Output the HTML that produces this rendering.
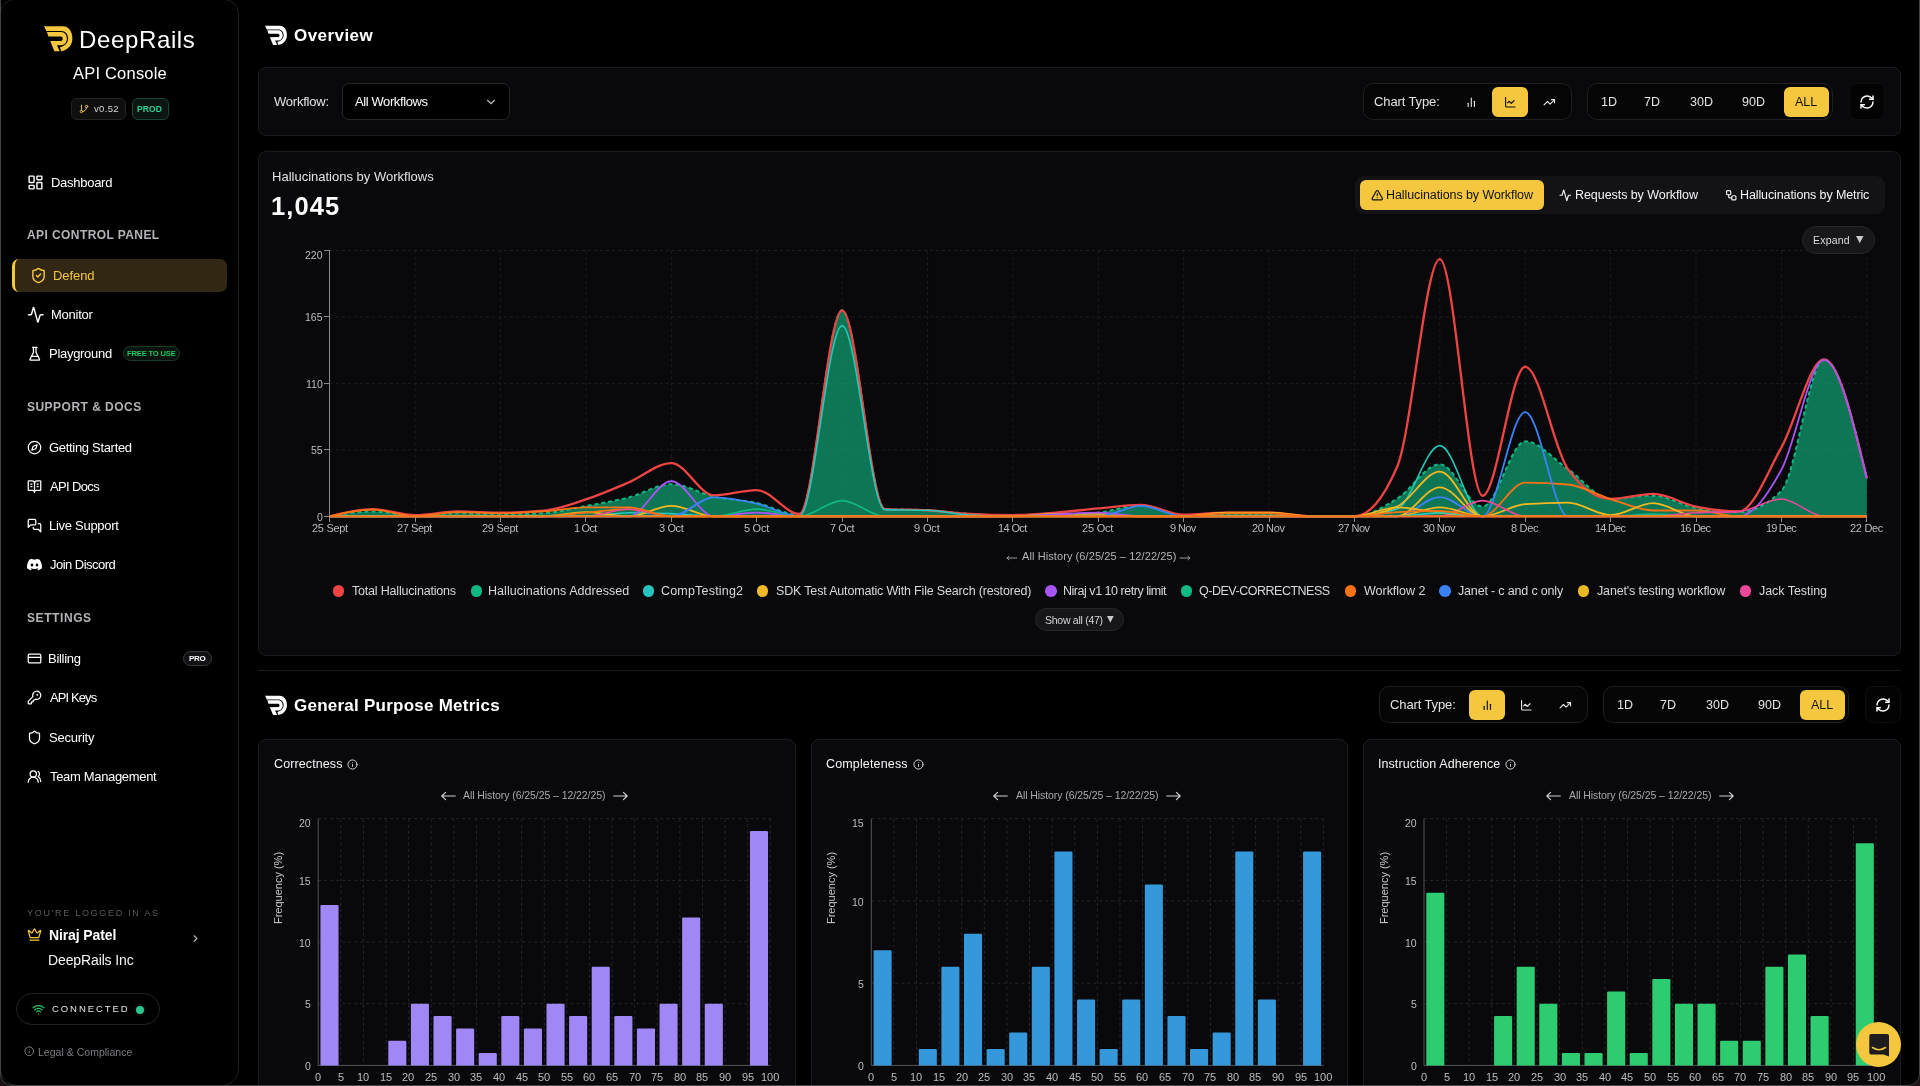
<!DOCTYPE html>
<html lang="en"><head><meta charset="utf-8"><title>DeepRails API Console</title>
<style>
html,body{margin:0;padding:0;background:#000;}
body{width:1920px;height:1086px;overflow:hidden;position:relative;font-family:"Liberation Sans",sans-serif;}
#root{position:absolute;left:0;top:0;width:1920px;height:1086px;overflow:hidden;background:#000;}
.t{position:absolute;white-space:nowrap;will-change:transform;font-family:"Liberation Sans",sans-serif;}
.b{position:absolute;box-sizing:border-box;}
svg.b{overflow:visible;}
</style></head><body><div id="root">
<svg class="b" style="left:261.9px;top:21.3px" width="30.8" height="27.72" viewBox="0 0 40 36"><path d="M4,6.3 L23,6.3 C29.2,6.3 32.4,12 32.4,18.6 C32.4,25.2 27.6,30.4 21.2,31.3 L19.9,27.3 C24.9,26.3 28.1,22.8 28.1,18.6 C28.1,14.2 25.6,10.9 21.2,10.9 L6.3,10.9 Z" fill="#fff"/><path d="M6.9,12.1 L21,12.1 C24.8,12.1 26.9,15.3 26.9,18.7 C26.9,22.4 24.2,25.3 20.6,25.3 L17,25.3 L19.7,31.3 L14.4,31.3 L10.2,21.1 L20.6,20.9 C22.2,20.9 22.7,19.8 22.7,18.7 C22.7,17.4 22,16.5 20.6,16.5 L8.4,16.5 Z" fill="#fff"/></svg>
<div class="t" style="left:294.30px;top:24.60px;font-size:17px;line-height:22px;color:#fff;font-weight:700;letter-spacing:0.436px;">Overview</div>
<div class="b" style="left:258px;top:67px;width:1643px;height:68.5px;background:#09090b;border:1px solid #1c1c20;border-radius:8px;box-sizing:border-box;"></div>
<div class="t" style="left:273.65px;top:93.00px;font-size:13px;line-height:17px;color:#e4e4e7;letter-spacing:-0.225px;">Workflow:</div>
<div class="b" style="left:342px;top:83px;width:168px;height:37px;background:#000;border:1px solid #26262a;border-radius:7px;box-sizing:border-box;"></div>
<div class="t" style="left:354.50px;top:93.00px;font-size:13px;line-height:17px;color:#fff;letter-spacing:-0.400px;">All Workflows</div>
<svg class="b" style="left:483.70px;top:94.80px" width="14" height="14" viewBox="0 0 24 24" fill="none" stroke="#b4b4b8" stroke-width="2" stroke-linecap="round" stroke-linejoin="round"><path d="m6 9 6 6 6-6"/></svg>
<div class="b" style="left:1363px;top:83px;width:208.7px;height:37px;background:#050506;border:1px solid #1f1f23;border-radius:10px;box-sizing:border-box;"></div>
<div class="t" style="left:1374.05px;top:93.00px;font-size:13px;line-height:17px;color:#e4e4e7;letter-spacing:-0.115px;">Chart Type:</div>
<svg class="b" style="left:1464.50px;top:95.60px" width="12.6" height="12.6" viewBox="0 0 24 24" fill="none" stroke="#e4e4e7" stroke-width="2.2" stroke-linecap="round" stroke-linejoin="round"><line x1="18" x2="18" y1="20" y2="10"/><line x1="12" x2="12" y1="20" y2="4"/><line x1="6" x2="6" y1="20" y2="14"/></svg>
<div class="b" style="left:1492px;top:87px;width:36px;height:29.5px;background:#f4c73f;border-radius:6px;"></div>
<svg class="b" style="left:1503.70px;top:95.60px" width="12.6" height="12.6" viewBox="0 0 24 24" fill="none" stroke="#111" stroke-width="2.2" stroke-linecap="round" stroke-linejoin="round"><path d="M3 3v16a2 2 0 0 0 2 2h16"/><path d="m19 9-5 5-4-4-3 3"/></svg>
<svg class="b" style="left:1542.70px;top:95.60px" width="12.6" height="12.6" viewBox="0 0 24 24" fill="none" stroke="#e4e4e7" stroke-width="2.2" stroke-linecap="round" stroke-linejoin="round"><polyline points="22 7 13.5 15.5 8.5 10.5 2 17"/><polyline points="16 7 22 7 22 13"/></svg>
<div class="b" style="left:1587px;top:83px;width:246px;height:37px;background:#050506;border:1px solid #1f1f23;border-radius:10px;box-sizing:border-box;"></div>
<div class="t" style="left:1600.83px;top:93.50px;font-size:12.5px;line-height:16px;color:#e4e4e7;">1D</div>
<div class="t" style="left:1643.97px;top:93.50px;font-size:12.5px;line-height:16px;color:#e4e4e7;">7D</div>
<div class="t" style="left:1689.60px;top:93.50px;font-size:12.5px;line-height:16px;color:#e4e4e7;">30D</div>
<div class="t" style="left:1742.15px;top:93.50px;font-size:12.5px;line-height:16px;color:#e4e4e7;">90D</div>
<div class="b" style="left:1784px;top:87px;width:44.5px;height:29.5px;background:#f4c73f;border-radius:6px;"></div>
<div class="t" style="left:1795.28px;top:93.50px;font-size:12.5px;line-height:16px;color:#111;">ALL</div>
<div class="b" style="left:1848.5px;top:83px;width:36.5px;height:37px;background:#030304;border:1px solid #0e0e10;border-radius:8px;box-sizing:border-box;"></div>
<svg class="b" style="left:1858.80px;top:93.50px" width="16" height="16" viewBox="0 0 24 24" fill="none" stroke="#fff" stroke-width="2.2" stroke-linecap="round" stroke-linejoin="round"><path d="M3 12a9 9 0 0 1 9-9 9.75 9.75 0 0 1 6.74 2.74L21 8"/><path d="M21 3v5h-5"/><path d="M21 12a9 9 0 0 1-9 9 9.75 9.75 0 0 1-6.74-2.74L3 16"/><path d="M8 16H3v5"/></svg>
<div class="b" style="left:258px;top:151px;width:1643px;height:504.5px;background:#09090b;border:1px solid #1c1c20;border-radius:8px;box-sizing:border-box;"></div>
<div class="t" style="left:272.15px;top:167.80px;font-size:13px;line-height:17px;color:#e4e4e7;letter-spacing:0.004px;">Hallucinations by Workflows</div>
<div class="t" style="left:271.40px;top:189.50px;font-size:25.5px;line-height:33px;color:#fff;font-weight:700;letter-spacing:1.113px;">1,045</div>
<div class="b" style="left:1355px;top:176px;width:530px;height:37.5px;background:#131316;border-radius:9px;"></div>
<div class="b" style="left:1360px;top:180px;width:184px;height:29.5px;background:#f4c73f;border-radius:6px;"></div>
<svg class="b" style="left:1371.05px;top:188.75px" width="12.5" height="12.5" viewBox="0 0 24 24" fill="none" stroke="#111" stroke-width="2.2" stroke-linecap="round" stroke-linejoin="round"><path d="m21.73 18-8-14a2 2 0 0 0-3.48 0l-8 14A2 2 0 0 0 4 21h16a2 2 0 0 0 1.73-3"/><path d="M12 9v4"/><path d="M12 17h.01"/></svg>
<div class="t" style="left:1386.40px;top:187.00px;font-size:12.5px;line-height:16px;color:#111;letter-spacing:-0.086px;">Hallucinations by Workflow</div>
<svg class="b" style="left:1559.25px;top:188.75px" width="12.5" height="12.5" viewBox="0 0 24 24" fill="none" stroke="#f4f4f5" stroke-width="2.2" stroke-linecap="round" stroke-linejoin="round"><path d="M22 12h-2.48a2 2 0 0 0-1.93 1.46l-2.35 8.36a.25.25 0 0 1-.48 0L9.24 2.18a.25.25 0 0 0-.48 0l-2.35 8.36A2 2 0 0 1 4.49 12H2"/></svg>
<div class="t" style="left:1575.00px;top:187.00px;font-size:12.5px;line-height:16px;color:#f4f4f5;letter-spacing:-0.061px;">Requests by Workflow</div>
<svg class="b" style="left:1724.75px;top:188.75px" width="12.5" height="12.5" viewBox="0 0 24 24" fill="none" stroke="#f4f4f5" stroke-width="2.2" stroke-linecap="round" stroke-linejoin="round"><rect width="8" height="8" x="3" y="3" rx="2"/><path d="M7 11v4a2 2 0 0 0 2 2h4"/><rect width="8" height="8" x="13" y="13" rx="2"/></svg>
<div class="t" style="left:1740.00px;top:187.00px;font-size:12.5px;line-height:16px;color:#f4f4f5;letter-spacing:-0.115px;">Hallucinations by Metric</div>
<svg class="b" style="left:0;top:0" width="1920" height="660" viewBox="0 0 1920 660" fill="none"><line x1="329.8" x2="1866.8" y1="449.85" y2="449.85" stroke="#1e1e22" stroke-dasharray="3 3"/><line x1="329.8" x2="1866.8" y1="383.40" y2="383.40" stroke="#1e1e22" stroke-dasharray="3 3"/><line x1="329.8" x2="1866.8" y1="316.95" y2="316.95" stroke="#1e1e22" stroke-dasharray="3 3"/><line x1="329.8" x2="1866.8" y1="250.50" y2="250.50" stroke="#1e1e22" stroke-dasharray="3 3"/><line x1="415.19" x2="415.19" y1="250.5" y2="516.3" stroke="#1e1e22" stroke-dasharray="3 3"/><line x1="500.58" x2="500.58" y1="250.5" y2="516.3" stroke="#1e1e22" stroke-dasharray="3 3"/><line x1="585.97" x2="585.97" y1="250.5" y2="516.3" stroke="#1e1e22" stroke-dasharray="3 3"/><line x1="671.36" x2="671.36" y1="250.5" y2="516.3" stroke="#1e1e22" stroke-dasharray="3 3"/><line x1="756.74" x2="756.74" y1="250.5" y2="516.3" stroke="#1e1e22" stroke-dasharray="3 3"/><line x1="842.13" x2="842.13" y1="250.5" y2="516.3" stroke="#1e1e22" stroke-dasharray="3 3"/><line x1="927.52" x2="927.52" y1="250.5" y2="516.3" stroke="#1e1e22" stroke-dasharray="3 3"/><line x1="1012.91" x2="1012.91" y1="250.5" y2="516.3" stroke="#1e1e22" stroke-dasharray="3 3"/><line x1="1098.30" x2="1098.30" y1="250.5" y2="516.3" stroke="#1e1e22" stroke-dasharray="3 3"/><line x1="1183.69" x2="1183.69" y1="250.5" y2="516.3" stroke="#1e1e22" stroke-dasharray="3 3"/><line x1="1269.08" x2="1269.08" y1="250.5" y2="516.3" stroke="#1e1e22" stroke-dasharray="3 3"/><line x1="1354.47" x2="1354.47" y1="250.5" y2="516.3" stroke="#1e1e22" stroke-dasharray="3 3"/><line x1="1439.86" x2="1439.86" y1="250.5" y2="516.3" stroke="#1e1e22" stroke-dasharray="3 3"/><line x1="1525.24" x2="1525.24" y1="250.5" y2="516.3" stroke="#1e1e22" stroke-dasharray="3 3"/><line x1="1610.63" x2="1610.63" y1="250.5" y2="516.3" stroke="#1e1e22" stroke-dasharray="3 3"/><line x1="1696.02" x2="1696.02" y1="250.5" y2="516.3" stroke="#1e1e22" stroke-dasharray="3 3"/><line x1="1781.41" x2="1781.41" y1="250.5" y2="516.3" stroke="#1e1e22" stroke-dasharray="3 3"/><line x1="1866.80" x2="1866.80" y1="250.5" y2="516.3" stroke="#1e1e22" stroke-dasharray="3 3"/><line x1="329.8" x2="329.8" y1="250.5" y2="522.3" stroke="#8a8a8e" shape-rendering="crispEdges"/><line x1="329.8" x2="1866.8" y1="516.3" y2="516.3" stroke="#8a8a8e" shape-rendering="crispEdges"/><line x1="323.8" x2="329.8" y1="516.30" y2="516.30" stroke="#8a8a8e" shape-rendering="crispEdges"/><line x1="323.8" x2="329.8" y1="449.85" y2="449.85" stroke="#8a8a8e" shape-rendering="crispEdges"/><line x1="323.8" x2="329.8" y1="383.40" y2="383.40" stroke="#8a8a8e" shape-rendering="crispEdges"/><line x1="323.8" x2="329.8" y1="316.95" y2="316.95" stroke="#8a8a8e" shape-rendering="crispEdges"/><line x1="323.8" x2="329.8" y1="250.50" y2="250.50" stroke="#8a8a8e" shape-rendering="crispEdges"/><line x1="329.80" x2="329.80" y1="516.3" y2="522.3" stroke="#8a8a8e" shape-rendering="crispEdges"/><line x1="415.19" x2="415.19" y1="516.3" y2="522.3" stroke="#8a8a8e" shape-rendering="crispEdges"/><line x1="500.58" x2="500.58" y1="516.3" y2="522.3" stroke="#8a8a8e" shape-rendering="crispEdges"/><line x1="585.97" x2="585.97" y1="516.3" y2="522.3" stroke="#8a8a8e" shape-rendering="crispEdges"/><line x1="671.36" x2="671.36" y1="516.3" y2="522.3" stroke="#8a8a8e" shape-rendering="crispEdges"/><line x1="756.74" x2="756.74" y1="516.3" y2="522.3" stroke="#8a8a8e" shape-rendering="crispEdges"/><line x1="842.13" x2="842.13" y1="516.3" y2="522.3" stroke="#8a8a8e" shape-rendering="crispEdges"/><line x1="927.52" x2="927.52" y1="516.3" y2="522.3" stroke="#8a8a8e" shape-rendering="crispEdges"/><line x1="1012.91" x2="1012.91" y1="516.3" y2="522.3" stroke="#8a8a8e" shape-rendering="crispEdges"/><line x1="1098.30" x2="1098.30" y1="516.3" y2="522.3" stroke="#8a8a8e" shape-rendering="crispEdges"/><line x1="1183.69" x2="1183.69" y1="516.3" y2="522.3" stroke="#8a8a8e" shape-rendering="crispEdges"/><line x1="1269.08" x2="1269.08" y1="516.3" y2="522.3" stroke="#8a8a8e" shape-rendering="crispEdges"/><line x1="1354.47" x2="1354.47" y1="516.3" y2="522.3" stroke="#8a8a8e" shape-rendering="crispEdges"/><line x1="1439.86" x2="1439.86" y1="516.3" y2="522.3" stroke="#8a8a8e" shape-rendering="crispEdges"/><line x1="1525.24" x2="1525.24" y1="516.3" y2="522.3" stroke="#8a8a8e" shape-rendering="crispEdges"/><line x1="1610.63" x2="1610.63" y1="516.3" y2="522.3" stroke="#8a8a8e" shape-rendering="crispEdges"/><line x1="1696.02" x2="1696.02" y1="516.3" y2="522.3" stroke="#8a8a8e" shape-rendering="crispEdges"/><line x1="1781.41" x2="1781.41" y1="516.3" y2="522.3" stroke="#8a8a8e" shape-rendering="crispEdges"/><line x1="1866.80" x2="1866.80" y1="516.3" y2="522.3" stroke="#8a8a8e" shape-rendering="crispEdges"/><path d="M329.80,516.30C344.03,513.88 358.26,511.47 372.49,511.47C386.73,511.47 400.96,515.70 415.19,515.70C429.42,515.70 443.65,513.28 457.88,513.28C472.11,513.28 486.35,514.49 500.58,514.49C514.81,514.49 529.04,514.09 543.27,513.28C557.50,512.47 571.74,508.67 585.97,506.03C600.20,503.39 614.43,501.10 628.66,497.45C642.89,493.81 657.12,484.16 671.36,484.16C685.59,484.16 699.82,493.47 714.05,496.61C728.28,499.75 742.51,499.99 756.74,503.01C770.98,506.03 785.21,514.73 799.44,514.73C813.67,514.73 827.90,310.30 842.13,310.30C856.36,310.30 870.60,508.25 884.83,509.05C899.06,509.86 913.29,509.45 927.52,510.26C941.75,511.06 955.99,512.98 970.22,513.88C984.45,514.79 998.68,515.70 1012.91,515.70C1027.14,515.70 1041.37,515.49 1055.61,515.09C1069.84,514.69 1084.07,514.29 1098.30,512.68C1112.53,511.06 1126.76,505.43 1140.99,505.43C1155.23,505.43 1169.46,515.70 1183.69,515.70C1197.92,515.70 1212.15,513.88 1226.38,513.88C1240.61,513.88 1254.85,513.88 1269.08,513.88C1283.31,513.88 1297.54,516.30 1311.77,516.30C1326.00,516.30 1340.24,516.30 1354.47,516.30C1368.70,516.30 1382.93,507.32 1397.16,498.66C1411.39,490.00 1425.62,464.35 1439.86,464.35C1454.09,464.35 1468.32,506.63 1482.55,506.63C1496.78,506.63 1511.01,441.39 1525.24,441.39C1539.48,441.39 1553.71,459.58 1567.94,469.18C1582.17,478.79 1596.40,499.02 1610.63,499.02C1624.86,499.02 1639.10,495.76 1653.33,495.76C1667.56,495.76 1681.79,505.43 1696.02,508.08C1710.25,510.74 1724.49,512.07 1738.72,512.07C1752.95,512.07 1767.18,505.02 1781.41,490.93C1795.64,476.83 1809.87,359.48 1824.11,359.48C1838.34,359.48 1852.57,418.86 1866.80,478.24L1866.8,516.3L329.8,516.3Z" fill="#10b981" fill-opacity="0.62"/><path d="M329.80,516.30C344.03,513.88 358.26,511.47 372.49,511.47C386.73,511.47 400.96,515.70 415.19,515.70C429.42,515.70 443.65,513.28 457.88,513.28C472.11,513.28 486.35,514.49 500.58,514.49C514.81,514.49 529.04,514.09 543.27,513.28C557.50,512.47 571.74,508.67 585.97,506.03C600.20,503.39 614.43,501.10 628.66,497.45C642.89,493.81 657.12,484.16 671.36,484.16C685.59,484.16 699.82,493.47 714.05,496.61C728.28,499.75 742.51,499.99 756.74,503.01C770.98,506.03 785.21,514.73 799.44,514.73C813.67,514.73 827.90,310.30 842.13,310.30C856.36,310.30 870.60,508.25 884.83,509.05C899.06,509.86 913.29,509.45 927.52,510.26C941.75,511.06 955.99,512.98 970.22,513.88C984.45,514.79 998.68,515.70 1012.91,515.70C1027.14,515.70 1041.37,515.49 1055.61,515.09C1069.84,514.69 1084.07,514.29 1098.30,512.68C1112.53,511.06 1126.76,505.43 1140.99,505.43C1155.23,505.43 1169.46,515.70 1183.69,515.70C1197.92,515.70 1212.15,513.88 1226.38,513.88C1240.61,513.88 1254.85,513.88 1269.08,513.88C1283.31,513.88 1297.54,516.30 1311.77,516.30C1326.00,516.30 1340.24,516.30 1354.47,516.30C1368.70,516.30 1382.93,507.32 1397.16,498.66C1411.39,490.00 1425.62,464.35 1439.86,464.35C1454.09,464.35 1468.32,506.63 1482.55,506.63C1496.78,506.63 1511.01,441.39 1525.24,441.39C1539.48,441.39 1553.71,459.58 1567.94,469.18C1582.17,478.79 1596.40,499.02 1610.63,499.02C1624.86,499.02 1639.10,495.76 1653.33,495.76C1667.56,495.76 1681.79,505.43 1696.02,508.08C1710.25,510.74 1724.49,512.07 1738.72,512.07C1752.95,512.07 1767.18,505.02 1781.41,490.93C1795.64,476.83 1809.87,359.48 1824.11,359.48C1838.34,359.48 1852.57,418.86 1866.80,478.24" fill="none" stroke="#10b981" stroke-width="2" stroke-dasharray="4 3"/><path d="M329.80,516.30C344.03,512.68 358.26,509.05 372.49,509.05C386.73,509.05 400.96,515.09 415.19,515.09C429.42,515.09 443.65,511.47 457.88,511.47C472.11,511.47 486.35,512.68 500.58,512.68C514.81,512.68 529.04,512.03 543.27,510.74C557.50,509.45 571.74,504.10 585.97,499.39C600.20,494.67 614.43,488.51 628.66,482.47C642.89,476.43 657.12,463.14 671.36,463.14C685.59,463.14 699.82,495.40 714.05,495.40C728.28,495.40 742.51,490.08 756.74,490.08C770.98,490.08 785.21,513.88 799.44,513.88C813.67,513.88 827.90,310.30 842.13,310.30C856.36,310.30 870.60,508.25 884.83,509.05C899.06,509.86 913.29,509.45 927.52,510.26C941.75,511.06 955.99,513.08 970.22,513.88C984.45,514.69 998.68,515.09 1012.91,515.09C1027.14,515.09 1041.37,513.78 1055.61,512.68C1069.84,511.57 1084.07,509.76 1098.30,508.45C1112.53,507.14 1126.76,504.82 1140.99,504.82C1155.23,504.82 1169.46,514.73 1183.69,514.73C1197.92,514.73 1212.15,512.68 1226.38,512.68C1240.61,512.68 1254.85,512.68 1269.08,512.68C1283.31,512.68 1297.54,516.30 1311.77,516.30C1326.00,516.30 1340.24,516.30 1354.47,516.30C1368.70,516.30 1382.93,499.79 1397.16,466.76C1411.39,433.74 1425.62,259.20 1439.86,259.20C1454.09,259.20 1468.32,495.76 1482.55,495.76C1496.78,495.76 1511.01,366.73 1525.24,366.73C1539.48,366.73 1553.71,449.29 1567.94,469.18C1582.17,489.08 1596.40,499.02 1610.63,499.02C1624.86,499.02 1639.10,493.95 1653.33,493.95C1667.56,493.95 1681.79,503.71 1696.02,506.63C1710.25,509.55 1724.49,511.47 1738.72,511.47C1752.95,511.47 1767.18,472.77 1781.41,447.43C1795.64,422.10 1809.87,359.48 1824.11,359.48C1838.34,359.48 1852.57,418.86 1866.80,478.24" fill="none" stroke="#ef4444" stroke-width="2.3"/><path d="M329.80,516.30C344.03,516.30 358.26,516.30 372.49,516.30C386.73,516.30 400.96,516.30 415.19,516.30C429.42,516.30 443.65,516.30 457.88,516.30C472.11,516.30 486.35,516.30 500.58,516.30C514.81,516.30 529.04,516.30 543.27,516.30C557.50,516.30 571.74,516.30 585.97,516.30C600.20,516.30 614.43,512.68 628.66,512.68C642.89,512.68 657.12,513.04 671.36,513.64C685.59,514.25 699.82,516.30 714.05,516.30C728.28,516.30 742.51,516.30 756.74,516.30C770.98,516.30 785.21,516.30 799.44,516.30C813.67,516.30 827.90,325.65 842.13,325.65C856.36,325.65 870.60,509.25 884.83,509.65C899.06,510.06 913.29,509.86 927.52,510.26C941.75,510.66 955.99,514.29 970.22,515.09C984.45,515.90 998.68,516.30 1012.91,516.30C1027.14,516.30 1041.37,516.30 1055.61,516.30C1069.84,516.30 1084.07,516.30 1098.30,516.30C1112.53,516.30 1126.76,516.30 1140.99,516.30C1155.23,516.30 1169.46,516.30 1183.69,516.30C1197.92,516.30 1212.15,516.30 1226.38,516.30C1240.61,516.30 1254.85,516.30 1269.08,516.30C1283.31,516.30 1297.54,516.30 1311.77,516.30C1326.00,516.30 1340.24,516.30 1354.47,516.30C1368.70,516.30 1382.93,513.88 1397.16,509.05C1411.39,504.22 1425.62,445.62 1439.86,445.62C1454.09,445.62 1468.32,516.30 1482.55,516.30C1496.78,516.30 1511.01,516.30 1525.24,516.30C1539.48,516.30 1553.71,516.30 1567.94,516.30C1582.17,516.30 1596.40,516.30 1610.63,516.30C1624.86,516.30 1639.10,516.30 1653.33,516.30C1667.56,516.30 1681.79,516.30 1696.02,516.30C1710.25,516.30 1724.49,516.30 1738.72,516.30C1752.95,516.30 1767.18,516.30 1781.41,516.30C1795.64,516.30 1809.87,516.30 1824.11,516.30C1838.34,516.30 1852.57,516.30 1866.80,516.30" fill="none" stroke="#25c9bd" stroke-width="1.6"/><path d="M329.80,516.30C344.03,516.30 358.26,516.30 372.49,516.30C386.73,516.30 400.96,516.30 415.19,516.30C429.42,516.30 443.65,516.30 457.88,516.30C472.11,516.30 486.35,516.30 500.58,516.30C514.81,516.30 529.04,516.30 543.27,516.30C557.50,516.30 571.74,512.07 585.97,512.07C600.20,512.07 614.43,516.30 628.66,516.30C642.89,516.30 657.12,505.79 671.36,505.79C685.59,505.79 699.82,516.30 714.05,516.30C728.28,516.30 742.51,516.30 756.74,516.30C770.98,516.30 785.21,516.30 799.44,516.30C813.67,516.30 827.90,516.30 842.13,516.30C856.36,516.30 870.60,516.30 884.83,516.30C899.06,516.30 913.29,516.30 927.52,516.30C941.75,516.30 955.99,516.30 970.22,516.30C984.45,516.30 998.68,516.30 1012.91,516.30C1027.14,516.30 1041.37,513.88 1055.61,513.88C1069.84,513.88 1084.07,513.88 1098.30,513.88C1112.53,513.88 1126.76,516.30 1140.99,516.30C1155.23,516.30 1169.46,516.30 1183.69,516.30C1197.92,516.30 1212.15,516.30 1226.38,516.30C1240.61,516.30 1254.85,516.30 1269.08,516.30C1283.31,516.30 1297.54,516.30 1311.77,516.30C1326.00,516.30 1340.24,516.30 1354.47,516.30C1368.70,516.30 1382.93,513.08 1397.16,506.63C1411.39,500.19 1425.62,471.60 1439.86,471.60C1454.09,471.60 1468.32,516.30 1482.55,516.30C1496.78,516.30 1511.01,516.30 1525.24,516.30C1539.48,516.30 1553.71,516.30 1567.94,516.30C1582.17,516.30 1596.40,516.30 1610.63,516.30C1624.86,516.30 1639.10,516.30 1653.33,516.30C1667.56,516.30 1681.79,516.30 1696.02,516.30C1710.25,516.30 1724.49,516.30 1738.72,516.30C1752.95,516.30 1767.18,516.30 1781.41,516.30C1795.64,516.30 1809.87,516.30 1824.11,516.30C1838.34,516.30 1852.57,516.30 1866.80,516.30" fill="none" stroke="#f5b91f" stroke-width="1.8"/><path d="M329.80,516.30C344.03,516.30 358.26,516.30 372.49,516.30C386.73,516.30 400.96,516.30 415.19,516.30C429.42,516.30 443.65,516.30 457.88,516.30C472.11,516.30 486.35,516.30 500.58,516.30C514.81,516.30 529.04,516.30 543.27,516.30C557.50,516.30 571.74,516.30 585.97,516.30C600.20,516.30 614.43,516.30 628.66,516.30C642.89,516.30 657.12,481.26 671.36,481.26C685.59,481.26 699.82,516.30 714.05,516.30C728.28,516.30 742.51,512.68 756.74,512.68C770.98,512.68 785.21,516.30 799.44,516.30C813.67,516.30 827.90,516.30 842.13,516.30C856.36,516.30 870.60,516.30 884.83,516.30C899.06,516.30 913.29,516.30 927.52,516.30C941.75,516.30 955.99,516.30 970.22,516.30C984.45,516.30 998.68,516.30 1012.91,516.30C1027.14,516.30 1041.37,515.09 1055.61,514.49C1069.84,513.88 1084.07,512.68 1098.30,512.68C1112.53,512.68 1126.76,516.30 1140.99,516.30C1155.23,516.30 1169.46,516.30 1183.69,516.30C1197.92,516.30 1212.15,516.30 1226.38,516.30C1240.61,516.30 1254.85,516.30 1269.08,516.30C1283.31,516.30 1297.54,516.30 1311.77,516.30C1326.00,516.30 1340.24,516.30 1354.47,516.30C1368.70,516.30 1382.93,516.30 1397.16,516.30C1411.39,516.30 1425.62,516.30 1439.86,516.30C1454.09,516.30 1468.32,516.30 1482.55,516.30C1496.78,516.30 1511.01,516.30 1525.24,516.30C1539.48,516.30 1553.71,516.30 1567.94,516.30C1582.17,516.30 1596.40,516.30 1610.63,516.30C1624.86,516.30 1639.10,516.30 1653.33,516.30C1667.56,516.30 1681.79,516.30 1696.02,516.30C1710.25,516.30 1724.49,516.30 1738.72,516.30C1752.95,516.30 1767.18,495.72 1781.41,469.66C1795.64,443.61 1809.87,359.96 1824.11,359.96C1838.34,359.96 1852.57,419.10 1866.80,478.24" fill="none" stroke="#a855f7" stroke-width="1.8"/><path d="M329.80,516.30C344.03,516.30 358.26,516.30 372.49,516.30C386.73,516.30 400.96,516.30 415.19,516.30C429.42,516.30 443.65,516.30 457.88,516.30C472.11,516.30 486.35,516.30 500.58,516.30C514.81,516.30 529.04,516.30 543.27,516.30C557.50,516.30 571.74,516.30 585.97,516.30C600.20,516.30 614.43,516.30 628.66,516.30C642.89,516.30 657.12,516.30 671.36,516.30C685.59,516.30 699.82,516.30 714.05,516.30C728.28,516.30 742.51,509.17 756.74,509.17C770.98,509.17 785.21,516.30 799.44,516.30C813.67,516.30 827.90,500.59 842.13,500.59C856.36,500.59 870.60,516.30 884.83,516.30C899.06,516.30 913.29,516.30 927.52,516.30C941.75,516.30 955.99,516.30 970.22,516.30C984.45,516.30 998.68,516.30 1012.91,516.30C1027.14,516.30 1041.37,516.30 1055.61,516.30C1069.84,516.30 1084.07,516.30 1098.30,516.30C1112.53,516.30 1126.76,516.30 1140.99,516.30C1155.23,516.30 1169.46,516.30 1183.69,516.30C1197.92,516.30 1212.15,516.30 1226.38,516.30C1240.61,516.30 1254.85,516.30 1269.08,516.30C1283.31,516.30 1297.54,516.30 1311.77,516.30C1326.00,516.30 1340.24,516.30 1354.47,516.30C1368.70,516.30 1382.93,516.30 1397.16,516.30C1411.39,516.30 1425.62,513.28 1439.86,513.28C1454.09,513.28 1468.32,516.30 1482.55,516.30C1496.78,516.30 1511.01,516.30 1525.24,516.30C1539.48,516.30 1553.71,516.30 1567.94,516.30C1582.17,516.30 1596.40,516.30 1610.63,516.30C1624.86,516.30 1639.10,514.13 1653.33,514.13C1667.56,514.13 1681.79,516.30 1696.02,516.30C1710.25,516.30 1724.49,516.30 1738.72,516.30C1752.95,516.30 1767.18,516.30 1781.41,516.30C1795.64,516.30 1809.87,516.30 1824.11,516.30C1838.34,516.30 1852.57,516.30 1866.80,516.30" fill="none" stroke="#10b981" stroke-width="1.6"/><path d="M329.80,516.30C344.03,516.30 358.26,516.30 372.49,516.30C386.73,516.30 400.96,516.30 415.19,516.30C429.42,516.30 443.65,516.30 457.88,516.30C472.11,516.30 486.35,516.30 500.58,516.30C514.81,516.30 529.04,516.30 543.27,516.30C557.50,516.30 571.74,513.88 585.97,512.68C600.20,511.47 614.43,509.05 628.66,509.05C642.89,509.05 657.12,516.30 671.36,516.30C685.59,516.30 699.82,516.30 714.05,516.30C728.28,516.30 742.51,516.30 756.74,516.30C770.98,516.30 785.21,516.30 799.44,516.30C813.67,516.30 827.90,516.30 842.13,516.30C856.36,516.30 870.60,516.30 884.83,516.30C899.06,516.30 913.29,516.30 927.52,516.30C941.75,516.30 955.99,516.30 970.22,516.30C984.45,516.30 998.68,516.30 1012.91,516.30C1027.14,516.30 1041.37,516.30 1055.61,516.30C1069.84,516.30 1084.07,516.30 1098.30,516.30C1112.53,516.30 1126.76,516.30 1140.99,516.30C1155.23,516.30 1169.46,516.30 1183.69,516.30C1197.92,516.30 1212.15,516.30 1226.38,516.30C1240.61,516.30 1254.85,516.30 1269.08,516.30C1283.31,516.30 1297.54,516.30 1311.77,516.30C1326.00,516.30 1340.24,516.30 1354.47,516.30C1368.70,516.30 1382.93,516.30 1397.16,516.30C1411.39,516.30 1425.62,516.30 1439.86,516.30C1454.09,516.30 1468.32,516.30 1482.55,516.30C1496.78,516.30 1511.01,482.71 1525.24,482.71C1539.48,482.71 1553.71,483.32 1567.94,484.52C1582.17,485.73 1596.40,494.69 1610.63,499.02C1624.86,503.35 1639.10,510.50 1653.33,510.50C1667.56,510.50 1681.79,510.50 1696.02,510.50C1710.25,510.50 1724.49,516.30 1738.72,516.30C1752.95,516.30 1767.18,516.30 1781.41,516.30C1795.64,516.30 1809.87,516.30 1824.11,516.30C1838.34,516.30 1852.57,516.30 1866.80,516.30" fill="none" stroke="#f97316" stroke-width="1.8"/><path d="M329.80,516.30C344.03,516.30 358.26,516.30 372.49,516.30C386.73,516.30 400.96,516.30 415.19,516.30C429.42,516.30 443.65,516.30 457.88,516.30C472.11,516.30 486.35,516.30 500.58,516.30C514.81,516.30 529.04,516.30 543.27,516.30C557.50,516.30 571.74,516.30 585.97,516.30C600.20,516.30 614.43,516.30 628.66,516.30C642.89,516.30 657.12,516.30 671.36,516.30C685.59,516.30 699.82,497.45 714.05,497.45C728.28,497.45 742.51,500.59 756.74,503.73C770.98,506.88 785.21,516.30 799.44,516.30C813.67,516.30 827.90,516.30 842.13,516.30C856.36,516.30 870.60,516.30 884.83,516.30C899.06,516.30 913.29,516.30 927.52,516.30C941.75,516.30 955.99,516.30 970.22,516.30C984.45,516.30 998.68,516.30 1012.91,516.30C1027.14,516.30 1041.37,516.30 1055.61,516.30C1069.84,516.30 1084.07,516.30 1098.30,516.30C1112.53,516.30 1126.76,505.79 1140.99,505.79C1155.23,505.79 1169.46,516.30 1183.69,516.30C1197.92,516.30 1212.15,516.30 1226.38,516.30C1240.61,516.30 1254.85,516.30 1269.08,516.30C1283.31,516.30 1297.54,516.30 1311.77,516.30C1326.00,516.30 1340.24,516.30 1354.47,516.30C1368.70,516.30 1382.93,516.30 1397.16,516.30C1411.39,516.30 1425.62,497.09 1439.86,497.09C1454.09,497.09 1468.32,516.30 1482.55,516.30C1496.78,516.30 1511.01,412.15 1525.24,412.15C1539.48,412.15 1553.71,516.30 1567.94,516.30C1582.17,516.30 1596.40,516.30 1610.63,516.30C1624.86,516.30 1639.10,516.30 1653.33,516.30C1667.56,516.30 1681.79,516.30 1696.02,516.30C1710.25,516.30 1724.49,516.30 1738.72,516.30C1752.95,516.30 1767.18,516.30 1781.41,516.30C1795.64,516.30 1809.87,516.30 1824.11,516.30C1838.34,516.30 1852.57,516.30 1866.80,516.30" fill="none" stroke="#3b82f6" stroke-width="1.8"/><path d="M329.80,516.30C344.03,516.30 358.26,516.30 372.49,516.30C386.73,516.30 400.96,516.30 415.19,516.30C429.42,516.30 443.65,516.30 457.88,516.30C472.11,516.30 486.35,516.30 500.58,516.30C514.81,516.30 529.04,516.30 543.27,516.30C557.50,516.30 571.74,516.30 585.97,516.30C600.20,516.30 614.43,516.30 628.66,516.30C642.89,516.30 657.12,516.30 671.36,516.30C685.59,516.30 699.82,516.30 714.05,516.30C728.28,516.30 742.51,516.30 756.74,516.30C770.98,516.30 785.21,516.30 799.44,516.30C813.67,516.30 827.90,516.30 842.13,516.30C856.36,516.30 870.60,516.30 884.83,516.30C899.06,516.30 913.29,516.30 927.52,516.30C941.75,516.30 955.99,516.30 970.22,516.30C984.45,516.30 998.68,516.30 1012.91,516.30C1027.14,516.30 1041.37,516.30 1055.61,516.30C1069.84,516.30 1084.07,516.30 1098.30,516.30C1112.53,516.30 1126.76,516.30 1140.99,516.30C1155.23,516.30 1169.46,516.30 1183.69,516.30C1197.92,516.30 1212.15,516.30 1226.38,516.30C1240.61,516.30 1254.85,516.30 1269.08,516.30C1283.31,516.30 1297.54,516.30 1311.77,516.30C1326.00,516.30 1340.24,516.30 1354.47,516.30C1368.70,516.30 1382.93,516.30 1397.16,516.30C1411.39,516.30 1425.62,487.30 1439.86,487.30C1454.09,487.30 1468.32,516.30 1482.55,516.30C1496.78,516.30 1511.01,505.27 1525.24,504.22C1539.48,503.17 1553.71,502.65 1567.94,502.65C1582.17,502.65 1596.40,515.09 1610.63,515.09C1624.86,515.09 1639.10,503.13 1653.33,503.13C1667.56,503.13 1681.79,516.30 1696.02,516.30C1710.25,516.30 1724.49,516.30 1738.72,516.30C1752.95,516.30 1767.18,516.30 1781.41,516.30C1795.64,516.30 1809.87,516.30 1824.11,516.30C1838.34,516.30 1852.57,516.30 1866.80,516.30" fill="none" stroke="#f5b91f" stroke-width="1.8"/><path d="M329.80,516.30C344.03,516.30 358.26,516.30 372.49,516.30C386.73,516.30 400.96,516.30 415.19,516.30C429.42,516.30 443.65,516.30 457.88,516.30C472.11,516.30 486.35,516.30 500.58,516.30C514.81,516.30 529.04,516.30 543.27,516.30C557.50,516.30 571.74,516.30 585.97,516.30C600.20,516.30 614.43,509.29 628.66,509.29C642.89,509.29 657.12,516.30 671.36,516.30C685.59,516.30 699.82,516.30 714.05,516.30C728.28,516.30 742.51,516.30 756.74,516.30C770.98,516.30 785.21,516.30 799.44,516.30C813.67,516.30 827.90,516.30 842.13,516.30C856.36,516.30 870.60,516.30 884.83,516.30C899.06,516.30 913.29,516.30 927.52,516.30C941.75,516.30 955.99,516.30 970.22,516.30C984.45,516.30 998.68,516.30 1012.91,516.30C1027.14,516.30 1041.37,516.30 1055.61,516.30C1069.84,516.30 1084.07,516.30 1098.30,516.30C1112.53,516.30 1126.76,516.30 1140.99,516.30C1155.23,516.30 1169.46,516.30 1183.69,516.30C1197.92,516.30 1212.15,516.30 1226.38,516.30C1240.61,516.30 1254.85,516.30 1269.08,516.30C1283.31,516.30 1297.54,516.30 1311.77,516.30C1326.00,516.30 1340.24,516.30 1354.47,516.30C1368.70,516.30 1382.93,516.30 1397.16,516.30C1411.39,516.30 1425.62,516.30 1439.86,516.30C1454.09,516.30 1468.32,500.59 1482.55,500.59C1496.78,500.59 1511.01,516.30 1525.24,516.30C1539.48,516.30 1553.71,516.30 1567.94,516.30C1582.17,516.30 1596.40,516.30 1610.63,516.30C1624.86,516.30 1639.10,516.30 1653.33,516.30C1667.56,516.30 1681.79,513.40 1696.02,512.68C1710.25,511.95 1724.49,512.31 1738.72,511.59C1752.95,510.86 1767.18,499.02 1781.41,499.02C1795.64,499.02 1809.87,516.30 1824.11,516.30C1838.34,516.30 1852.57,516.30 1866.80,516.30" fill="none" stroke="#ec4899" stroke-width="1.6"/><path d="M329.80,516.30C344.03,516.30 358.26,516.30 372.49,516.30C386.73,516.30 400.96,516.30 415.19,516.30C429.42,516.30 443.65,516.30 457.88,516.30C472.11,516.30 486.35,516.30 500.58,516.30C514.81,516.30 529.04,516.30 543.27,516.30C557.50,516.30 571.74,516.30 585.97,516.30C600.20,516.30 614.43,516.30 628.66,516.30C642.89,516.30 657.12,516.30 671.36,516.30C685.59,516.30 699.82,516.30 714.05,516.30C728.28,516.30 742.51,516.30 756.74,516.30C770.98,516.30 785.21,516.30 799.44,516.30C813.67,516.30 827.90,516.30 842.13,516.30C856.36,516.30 870.60,516.30 884.83,516.30C899.06,516.30 913.29,516.30 927.52,516.30C941.75,516.30 955.99,516.30 970.22,516.30C984.45,516.30 998.68,516.30 1012.91,516.30C1027.14,516.30 1041.37,516.30 1055.61,516.30C1069.84,516.30 1084.07,516.30 1098.30,516.30C1112.53,516.30 1126.76,516.30 1140.99,516.30C1155.23,516.30 1169.46,516.30 1183.69,516.30C1197.92,516.30 1212.15,516.30 1226.38,516.30C1240.61,516.30 1254.85,516.30 1269.08,516.30C1283.31,516.30 1297.54,516.30 1311.77,516.30C1326.00,516.30 1340.24,516.30 1354.47,516.30C1368.70,516.30 1382.93,507.36 1397.16,507.36C1411.39,507.36 1425.62,511.19 1439.86,512.68C1454.09,514.17 1468.32,516.30 1482.55,516.30C1496.78,516.30 1511.01,516.30 1525.24,516.30C1539.48,516.30 1553.71,516.30 1567.94,516.30C1582.17,516.30 1596.40,516.30 1610.63,516.30C1624.86,516.30 1639.10,516.30 1653.33,516.30C1667.56,516.30 1681.79,516.30 1696.02,516.30C1710.25,516.30 1724.49,516.30 1738.72,516.30C1752.95,516.30 1767.18,516.30 1781.41,516.30C1795.64,516.30 1809.87,516.30 1824.11,516.30C1838.34,516.30 1852.57,516.30 1866.80,516.30" fill="none" stroke="#f5b91f" stroke-width="1.6"/><path d="M329.80,516.30C344.03,516.30 358.26,516.30 372.49,516.30C386.73,516.30 400.96,516.30 415.19,516.30C429.42,516.30 443.65,516.30 457.88,516.30C472.11,516.30 486.35,516.30 500.58,516.30C514.81,516.30 529.04,516.30 543.27,516.30C557.50,516.30 571.74,516.30 585.97,516.30C600.20,516.30 614.43,516.30 628.66,516.30C642.89,516.30 657.12,516.30 671.36,516.30C685.59,516.30 699.82,516.30 714.05,516.30C728.28,516.30 742.51,516.30 756.74,516.30C770.98,516.30 785.21,516.30 799.44,516.30C813.67,516.30 827.90,516.30 842.13,516.30C856.36,516.30 870.60,516.30 884.83,516.30C899.06,516.30 913.29,516.30 927.52,516.30C941.75,516.30 955.99,516.30 970.22,516.30C984.45,516.30 998.68,516.30 1012.91,516.30C1027.14,516.30 1041.37,516.30 1055.61,516.30C1069.84,516.30 1084.07,516.30 1098.30,516.30C1112.53,516.30 1126.76,516.30 1140.99,516.30C1155.23,516.30 1169.46,516.30 1183.69,516.30C1197.92,516.30 1212.15,512.43 1226.38,512.43C1240.61,512.43 1254.85,512.43 1269.08,512.43C1283.31,512.43 1297.54,516.30 1311.77,516.30C1326.00,516.30 1340.24,516.30 1354.47,516.30C1368.70,516.30 1382.93,516.30 1397.16,516.30C1411.39,516.30 1425.62,507.36 1439.86,507.36C1454.09,507.36 1468.32,516.30 1482.55,516.30C1496.78,516.30 1511.01,516.30 1525.24,516.30C1539.48,516.30 1553.71,516.30 1567.94,516.30C1582.17,516.30 1596.40,516.30 1610.63,516.30C1624.86,516.30 1639.10,516.30 1653.33,516.30C1667.56,516.30 1681.79,516.30 1696.02,516.30C1710.25,516.30 1724.49,516.30 1738.72,516.30C1752.95,516.30 1767.18,516.30 1781.41,516.30C1795.64,516.30 1809.87,516.30 1824.11,516.30C1838.34,516.30 1852.57,516.30 1866.80,516.30" fill="none" stroke="#f5b91f" stroke-width="1.6"/><path d="M329.80,516.30C344.03,516.30 358.26,516.30 372.49,516.30C386.73,516.30 400.96,516.30 415.19,516.30C429.42,516.30 443.65,516.30 457.88,516.30C472.11,516.30 486.35,516.30 500.58,516.30C514.81,516.30 529.04,516.30 543.27,516.30C557.50,516.30 571.74,516.30 585.97,516.30C600.20,516.30 614.43,516.30 628.66,516.30C642.89,516.30 657.12,516.30 671.36,516.30C685.59,516.30 699.82,516.30 714.05,516.30C728.28,516.30 742.51,516.30 756.74,516.30C770.98,516.30 785.21,516.30 799.44,516.30C813.67,516.30 827.90,516.30 842.13,516.30C856.36,516.30 870.60,516.30 884.83,516.30C899.06,516.30 913.29,516.30 927.52,516.30C941.75,516.30 955.99,516.30 970.22,516.30C984.45,516.30 998.68,516.30 1012.91,516.30C1027.14,516.30 1041.37,516.30 1055.61,516.30C1069.84,516.30 1084.07,516.30 1098.30,516.30C1112.53,516.30 1126.76,516.30 1140.99,516.30C1155.23,516.30 1169.46,516.30 1183.69,516.30C1197.92,516.30 1212.15,516.30 1226.38,516.30C1240.61,516.30 1254.85,516.30 1269.08,516.30C1283.31,516.30 1297.54,516.30 1311.77,516.30C1326.00,516.30 1340.24,516.30 1354.47,516.30C1368.70,516.30 1382.93,516.30 1397.16,516.30C1411.39,516.30 1425.62,512.68 1439.86,512.68C1454.09,512.68 1468.32,516.30 1482.55,516.30C1496.78,516.30 1511.01,516.30 1525.24,516.30C1539.48,516.30 1553.71,516.30 1567.94,516.30C1582.17,516.30 1596.40,516.30 1610.63,516.30C1624.86,516.30 1639.10,516.30 1653.33,516.30C1667.56,516.30 1681.79,516.30 1696.02,516.30C1710.25,516.30 1724.49,516.30 1738.72,516.30C1752.95,516.30 1767.18,516.30 1781.41,516.30C1795.64,516.30 1809.87,516.30 1824.11,516.30C1838.34,516.30 1852.57,516.30 1866.80,516.30" fill="none" stroke="#25c9bd" stroke-width="1.4"/><path d="M329.80,516.30C344.03,512.98 358.26,509.65 372.49,509.65C386.73,509.65 400.96,516.30 415.19,516.30C429.42,516.30 443.65,512.07 457.88,512.07C472.11,512.07 486.35,513.28 500.58,513.28C514.81,513.28 529.04,512.45 543.27,511.47C557.50,510.48 571.74,507.36 585.97,507.36C600.20,507.36 614.43,507.36 628.66,507.36C642.89,507.36 657.12,516.30 671.36,516.30C685.59,516.30 699.82,516.30 714.05,516.30C728.28,516.30 742.51,516.30 756.74,516.30C770.98,516.30 785.21,516.30 799.44,516.30C813.67,516.30 827.90,516.30 842.13,516.30C856.36,516.30 870.60,516.30 884.83,516.30C899.06,516.30 913.29,516.30 927.52,516.30C941.75,516.30 955.99,516.30 970.22,516.30C984.45,516.30 998.68,516.30 1012.91,516.30C1027.14,516.30 1041.37,516.30 1055.61,516.30C1069.84,516.30 1084.07,516.30 1098.30,516.30C1112.53,516.30 1126.76,516.30 1140.99,516.30C1155.23,516.30 1169.46,516.30 1183.69,516.30C1197.92,516.30 1212.15,513.28 1226.38,513.28C1240.61,513.28 1254.85,513.28 1269.08,513.28C1283.31,513.28 1297.54,516.30 1311.77,516.30C1326.00,516.30 1340.24,516.30 1354.47,516.30C1368.70,516.30 1382.93,512.80 1397.16,512.07C1411.39,511.35 1425.62,510.98 1439.86,510.98C1454.09,510.98 1468.32,516.30 1482.55,516.30C1496.78,516.30 1511.01,516.30 1525.24,516.30C1539.48,516.30 1553.71,516.30 1567.94,516.30C1582.17,516.30 1596.40,516.30 1610.63,516.30C1624.86,516.30 1639.10,516.30 1653.33,516.30C1667.56,516.30 1681.79,516.30 1696.02,516.30C1710.25,516.30 1724.49,516.30 1738.72,516.30C1752.95,516.30 1767.18,516.30 1781.41,516.30C1795.64,516.30 1809.87,516.30 1824.11,516.30C1838.34,516.30 1852.57,516.30 1866.80,516.30" fill="none" stroke="#f97316" stroke-width="1.8"/><path d="M329.80,516.30C344.03,516.30 358.26,516.30 372.49,516.30C386.73,516.30 400.96,516.30 415.19,516.30C429.42,516.30 443.65,516.30 457.88,516.30C472.11,516.30 486.35,516.30 500.58,516.30C514.81,516.30 529.04,516.30 543.27,516.30C557.50,516.30 571.74,516.30 585.97,516.30C600.20,516.30 614.43,516.30 628.66,516.30C642.89,516.30 657.12,516.30 671.36,516.30C685.59,516.30 699.82,516.30 714.05,516.30C728.28,516.30 742.51,516.30 756.74,516.30C770.98,516.30 785.21,516.30 799.44,516.30C813.67,516.30 827.90,516.30 842.13,516.30C856.36,516.30 870.60,516.30 884.83,516.30C899.06,516.30 913.29,516.30 927.52,516.30C941.75,516.30 955.99,516.30 970.22,516.30C984.45,516.30 998.68,516.30 1012.91,516.30C1027.14,516.30 1041.37,516.30 1055.61,516.30C1069.84,516.30 1084.07,516.30 1098.30,516.30C1112.53,516.30 1126.76,516.30 1140.99,516.30C1155.23,516.30 1169.46,516.30 1183.69,516.30C1197.92,516.30 1212.15,516.30 1226.38,516.30C1240.61,516.30 1254.85,516.30 1269.08,516.30C1283.31,516.30 1297.54,516.30 1311.77,516.30C1326.00,516.30 1340.24,516.30 1354.47,516.30C1368.70,516.30 1382.93,516.30 1397.16,516.30C1411.39,516.30 1425.62,516.30 1439.86,516.30C1454.09,516.30 1468.32,516.30 1482.55,516.30C1496.78,516.30 1511.01,516.30 1525.24,516.30C1539.48,516.30 1553.71,516.30 1567.94,516.30C1582.17,516.30 1596.40,516.30 1610.63,516.30C1624.86,516.30 1639.10,516.30 1653.33,516.30C1667.56,516.30 1681.79,516.30 1696.02,516.30C1710.25,516.30 1724.49,516.30 1738.72,516.30C1752.95,516.30 1767.18,516.30 1781.41,516.30C1795.64,516.30 1809.87,516.30 1824.11,516.30C1838.34,516.30 1852.57,516.30 1866.80,516.30" fill="none" stroke="#f97316" stroke-width="1.8"/></svg>
<div class="t" style="left:305.05px;top:247.60px;font-size:10.5px;line-height:14px;color:#bcbcc0;">220</div>
<div class="t" style="left:305.10px;top:310.10px;font-size:10.5px;line-height:14px;color:#bcbcc0;">165</div>
<div class="t" style="left:305.85px;top:376.50px;font-size:10.5px;line-height:14px;color:#bcbcc0;">110</div>
<div class="t" style="left:310.95px;top:443.00px;font-size:10.5px;line-height:14px;color:#bcbcc0;">55</div>
<div class="t" style="left:316.75px;top:509.90px;font-size:10.5px;line-height:14px;color:#bcbcc0;">0</div>
<div class="t" style="left:311.50px;top:521.40px;font-size:11px;line-height:14px;color:#bcbcc0;letter-spacing:-0.300px;">25 Sept</div>
<div class="t" style="left:397.29px;top:521.40px;font-size:11px;line-height:14px;color:#bcbcc0;letter-spacing:-0.433px;">27 Sept</div>
<div class="t" style="left:482.18px;top:521.40px;font-size:11px;line-height:14px;color:#bcbcc0;letter-spacing:-0.267px;">29 Sept</div>
<div class="t" style="left:573.97px;top:521.40px;font-size:11px;line-height:14px;color:#bcbcc0;letter-spacing:-0.775px;">1 Oct</div>
<div class="t" style="left:658.81px;top:521.40px;font-size:11px;line-height:14px;color:#bcbcc0;letter-spacing:-0.388px;">3 Oct</div>
<div class="t" style="left:743.94px;top:521.40px;font-size:11px;line-height:14px;color:#bcbcc0;letter-spacing:-0.275px;">5 Oct</div>
<div class="t" style="left:829.58px;top:521.40px;font-size:11px;line-height:14px;color:#bcbcc0;letter-spacing:-0.425px;">7 Oct</div>
<div class="t" style="left:914.42px;top:521.40px;font-size:11px;line-height:14px;color:#bcbcc0;letter-spacing:-0.138px;">9 Oct</div>
<div class="t" style="left:997.86px;top:521.40px;font-size:11px;line-height:14px;color:#bcbcc0;letter-spacing:-0.620px;">14 Oct</div>
<div class="t" style="left:1082.40px;top:521.40px;font-size:11px;line-height:14px;color:#bcbcc0;letter-spacing:-0.220px;">25 Oct</div>
<div class="t" style="left:1170.29px;top:521.40px;font-size:11px;line-height:14px;color:#bcbcc0;letter-spacing:-0.600px;">9 Nov</div>
<div class="t" style="left:1252.38px;top:521.40px;font-size:11px;line-height:14px;color:#bcbcc0;letter-spacing:-0.390px;">20 Nov</div>
<div class="t" style="left:1338.27px;top:521.40px;font-size:11px;line-height:14px;color:#bcbcc0;letter-spacing:-0.590px;">27 Nov</div>
<div class="t" style="left:1423.46px;top:521.40px;font-size:11px;line-height:14px;color:#bcbcc0;letter-spacing:-0.480px;">30 Nov</div>
<div class="t" style="left:1511.44px;top:521.40px;font-size:11px;line-height:14px;color:#bcbcc0;letter-spacing:-0.325px;">8 Dec</div>
<div class="t" style="left:1594.88px;top:521.40px;font-size:11px;line-height:14px;color:#bcbcc0;letter-spacing:-0.780px;">14 Dec</div>
<div class="t" style="left:1680.27px;top:521.40px;font-size:11px;line-height:14px;color:#bcbcc0;letter-spacing:-0.780px;">16 Dec</div>
<div class="t" style="left:1765.81px;top:521.40px;font-size:11px;line-height:14px;color:#bcbcc0;letter-spacing:-0.840px;">19 Dec</div>
<div class="t" style="left:1850.00px;top:521.40px;font-size:11px;line-height:14px;color:#bcbcc0;letter-spacing:-0.300px;">22 Dec</div>
<div class="t" style="left:1021.70px;top:549.30px;font-size:11px;line-height:14px;color:#b4b4b8;letter-spacing:0.087px;">All History (6/25/25 – 12/22/25)</div>
<svg class="b" style="left:1006px;top:552.5px;" width="12" height="10" viewBox="0 0 12 10" fill="none"><path d="M10.8,5H1M2.9,3.2L1,5L2.9,6.8" stroke="#9a9a9e" stroke-width="1" stroke-linecap="round" stroke-linejoin="round"/></svg>
<svg class="b" style="left:1178.5px;top:552.5px;" width="12" height="10" viewBox="0 0 12 10" fill="none"><path d="M1,5H10.8M8.9,3.2L10.8,5L8.9,6.8" stroke="#9a9a9e" stroke-width="1" stroke-linecap="round" stroke-linejoin="round"/></svg>
<div class="b" style="left:332.5px;top:585.0px;width:11.6px;height:11.6px;border-radius:50%;background:#ef4444"></div>
<div class="t" style="left:351.75px;top:582.80px;font-size:12.5px;line-height:16px;color:#d8d8dc;letter-spacing:-0.189px;">Total Hallucinations</div>
<div class="b" style="left:470.5px;top:585.0px;width:11.6px;height:11.6px;border-radius:50%;background:#10b981"></div>
<div class="t" style="left:487.80px;top:582.80px;font-size:12.5px;line-height:16px;color:#d8d8dc;letter-spacing:0.041px;">Hallucinations Addressed</div>
<div class="b" style="left:642.5px;top:585.0px;width:11.6px;height:11.6px;border-radius:50%;background:#25c4c0"></div>
<div class="t" style="left:661.10px;top:582.80px;font-size:12.5px;line-height:16px;color:#d8d8dc;letter-spacing:0.191px;">CompTesting2</div>
<div class="b" style="left:756.7px;top:585.0px;width:11.6px;height:11.6px;border-radius:50%;background:#f0b92a"></div>
<div class="t" style="left:775.75px;top:582.80px;font-size:12.5px;line-height:16px;color:#d8d8dc;letter-spacing:-0.170px;">SDK Test Automatic With File Search (restored)</div>
<div class="b" style="left:1045.0px;top:585.0px;width:11.6px;height:11.6px;border-radius:50%;background:#a855f7"></div>
<div class="t" style="left:1062.80px;top:582.80px;font-size:12.5px;line-height:16px;color:#d8d8dc;letter-spacing:-0.470px;">Niraj v1 10 retry limit</div>
<div class="b" style="left:1180.9px;top:585.0px;width:11.6px;height:11.6px;border-radius:50%;background:#10b981"></div>
<div class="t" style="left:1199.40px;top:582.80px;font-size:12.5px;line-height:16px;color:#d8d8dc;letter-spacing:-0.484px;">Q-DEV-CORRECTNESS</div>
<div class="b" style="left:1344.6px;top:585.0px;width:11.6px;height:11.6px;border-radius:50%;background:#f97316"></div>
<div class="t" style="left:1363.75px;top:582.80px;font-size:12.5px;line-height:16px;color:#d8d8dc;letter-spacing:-0.017px;">Workflow 2</div>
<div class="b" style="left:1439.2px;top:585.0px;width:11.6px;height:11.6px;border-radius:50%;background:#3b82f6"></div>
<div class="t" style="left:1458.10px;top:582.80px;font-size:12.5px;line-height:16px;color:#d8d8dc;letter-spacing:-0.168px;">Janet - c and c only</div>
<div class="b" style="left:1577.5px;top:585.0px;width:11.6px;height:11.6px;border-radius:50%;background:#e8b923"></div>
<div class="t" style="left:1596.80px;top:582.80px;font-size:12.5px;line-height:16px;color:#d8d8dc;letter-spacing:-0.150px;">Janet's testing workflow</div>
<div class="b" style="left:1739.6px;top:585.0px;width:11.6px;height:11.6px;border-radius:50%;background:#ec4899"></div>
<div class="t" style="left:1758.60px;top:582.80px;font-size:12.5px;line-height:16px;color:#d8d8dc;letter-spacing:-0.050px;">Jack Testing</div>
<div class="b" style="left:1035.4px;top:608.3px;width:88.4px;height:23.2px;background:#17171a;border:1px solid #26272d;border-radius:11.6px;box-sizing:border-box;"></div>
<div class="t" style="left:1045.05px;top:613.00px;font-size:10.5px;line-height:14px;color:#d4d4d8;letter-spacing:-0.267px;">Show all (47)</div>
<svg class="b" style="left:1106.9px;top:616.2px;" width="6.7" height="6.7" viewBox="0 0 6.7 6.7" fill="none"><path d="M0,0H6.7L3.35,6.7Z" fill="#c9c9cb"/></svg>
<div class="b" style="left:1802.2px;top:226px;width:72.8px;height:27.8px;background:#17171a;border:1px solid #26272d;border-radius:14px;box-sizing:border-box;"></div>
<div class="t" style="left:1813.15px;top:233.00px;font-size:10.5px;line-height:14px;color:#dcdcde;letter-spacing:0.190px;">Expand</div>
<svg class="b" style="left:1855.6px;top:236px;" width="7.5" height="7.2" viewBox="0 0 7.5 7.2" fill="none"><path d="M0,0H7.5L3.75,7.2Z" fill="#c9c9cb"/></svg>
<div class="b" style="left:258px;top:670px;width:1643px;height:1px;background:#1b1b1e;"></div>
<svg class="b" style="left:262.2px;top:691.2px" width="30.8" height="27.72" viewBox="0 0 40 36"><path d="M4,6.3 L23,6.3 C29.2,6.3 32.4,12 32.4,18.6 C32.4,25.2 27.6,30.4 21.2,31.3 L19.9,27.3 C24.9,26.3 28.1,22.8 28.1,18.6 C28.1,14.2 25.6,10.9 21.2,10.9 L6.3,10.9 Z" fill="#fff"/><path d="M6.9,12.1 L21,12.1 C24.8,12.1 26.9,15.3 26.9,18.7 C26.9,22.4 24.2,25.3 20.6,25.3 L17,25.3 L19.7,31.3 L14.4,31.3 L10.2,21.1 L20.6,20.9 C22.2,20.9 22.7,19.8 22.7,18.7 C22.7,17.4 22,16.5 20.6,16.5 L8.4,16.5 Z" fill="#fff"/></svg>
<div class="t" style="left:294.10px;top:695.00px;font-size:17px;line-height:22px;color:#fff;font-weight:700;letter-spacing:0.241px;">General Purpose Metrics</div>
<div class="b" style="left:1379px;top:686px;width:208.7px;height:37px;background:#050506;border:1px solid #1f1f23;border-radius:10px;box-sizing:border-box;"></div>
<div class="t" style="left:1390.05px;top:696.00px;font-size:13px;line-height:17px;color:#e4e4e7;letter-spacing:-0.115px;">Chart Type:</div>
<div class="b" style="left:1468.8px;top:690px;width:36px;height:29.5px;background:#f4c73f;border-radius:6px;"></div>
<svg class="b" style="left:1480.50px;top:698.60px" width="12.6" height="12.6" viewBox="0 0 24 24" fill="none" stroke="#111" stroke-width="2.2" stroke-linecap="round" stroke-linejoin="round"><line x1="18" x2="18" y1="20" y2="10"/><line x1="12" x2="12" y1="20" y2="4"/><line x1="6" x2="6" y1="20" y2="14"/></svg>
<svg class="b" style="left:1519.70px;top:698.60px" width="12.6" height="12.6" viewBox="0 0 24 24" fill="none" stroke="#e4e4e7" stroke-width="2.2" stroke-linecap="round" stroke-linejoin="round"><path d="M3 3v16a2 2 0 0 0 2 2h16"/><path d="m19 9-5 5-4-4-3 3"/></svg>
<svg class="b" style="left:1558.70px;top:698.60px" width="12.6" height="12.6" viewBox="0 0 24 24" fill="none" stroke="#e4e4e7" stroke-width="2.2" stroke-linecap="round" stroke-linejoin="round"><polyline points="22 7 13.5 15.5 8.5 10.5 2 17"/><polyline points="16 7 22 7 22 13"/></svg>
<div class="b" style="left:1603px;top:686px;width:246px;height:37px;background:#050506;border:1px solid #1f1f23;border-radius:10px;box-sizing:border-box;"></div>
<div class="t" style="left:1616.83px;top:696.50px;font-size:12.5px;line-height:16px;color:#e4e4e7;">1D</div>
<div class="t" style="left:1659.97px;top:696.50px;font-size:12.5px;line-height:16px;color:#e4e4e7;">7D</div>
<div class="t" style="left:1705.60px;top:696.50px;font-size:12.5px;line-height:16px;color:#e4e4e7;">30D</div>
<div class="t" style="left:1758.15px;top:696.50px;font-size:12.5px;line-height:16px;color:#e4e4e7;">90D</div>
<div class="b" style="left:1800px;top:690px;width:44.5px;height:29.5px;background:#f4c73f;border-radius:6px;"></div>
<div class="t" style="left:1811.28px;top:696.50px;font-size:12.5px;line-height:16px;color:#111;">ALL</div>
<div class="b" style="left:1864.5px;top:686px;width:36.5px;height:37px;background:#030304;border:1px solid #0e0e10;border-radius:8px;box-sizing:border-box;"></div>
<svg class="b" style="left:1874.80px;top:696.50px" width="16" height="16" viewBox="0 0 24 24" fill="none" stroke="#fff" stroke-width="2.2" stroke-linecap="round" stroke-linejoin="round"><path d="M3 12a9 9 0 0 1 9-9 9.75 9.75 0 0 1 6.74 2.74L21 8"/><path d="M21 3v5h-5"/><path d="M21 12a9 9 0 0 1-9 9 9.75 9.75 0 0 1-6.74-2.74L3 16"/><path d="M8 16H3v5"/></svg>
<div class="b" style="left:258.4px;top:739.3px;width:537.2px;height:420px;background:#09090b;border:1px solid #1c1c20;border-radius:8px;box-sizing:border-box;"></div>
<div class="t" style="left:273.60px;top:755.90px;font-size:12.5px;line-height:16px;color:#f4f4f5;letter-spacing:0.105px;">Correctness</div>
<svg class="b" style="left:347.10px;top:758.50px" width="11" height="11" viewBox="0 0 24 24" fill="none" stroke="#e4e4e7" stroke-width="2" stroke-linecap="round" stroke-linejoin="round"><circle cx="12" cy="12" r="10"/><path d="M12 16v-4"/><path d="M12 8h.01"/></svg>
<svg class="b" style="left:440.59999999999997px;top:790.7px;" width="15" height="10" viewBox="0 0 15 10" fill="none"><path d="M14.3,5H0.8M4.6,1.3L0.8,5L4.6,8.7" stroke="#d4d4d8" stroke-width="1.1" stroke-linecap="round" stroke-linejoin="round"/></svg>
<div class="t" style="left:463.40px;top:788.10px;font-size:10.5px;line-height:14px;color:#a8a8ae;letter-spacing:-0.074px;">All History (6/25/25 – 12/22/25)</div>
<svg class="b" style="left:613.2px;top:790.7px;" width="15" height="10" viewBox="0 0 15 10" fill="none"><path d="M0.7,5H14.2M10.4,1.3L14.2,5L10.4,8.7" stroke="#d4d4d8" stroke-width="1.1" stroke-linecap="round" stroke-linejoin="round"/></svg>
<svg class="b" style="left:0;top:0" width="1920" height="1086" viewBox="0 0 1920 1086" fill="none"><line x1="318.20" x2="770.30" y1="1003.73" y2="1003.73" stroke="#27272b" stroke-dasharray="3 3"/><line x1="318.20" x2="770.30" y1="942.05" y2="942.05" stroke="#27272b" stroke-dasharray="3 3"/><line x1="318.20" x2="770.30" y1="880.38" y2="880.38" stroke="#27272b" stroke-dasharray="3 3"/><line x1="318.20" x2="770.30" y1="818.70" y2="818.70" stroke="#27272b" stroke-dasharray="3 3"/><line x1="340.81" x2="340.81" y1="818.7" y2="1065.4" stroke="#27272b" stroke-dasharray="3 3"/><line x1="363.41" x2="363.41" y1="818.7" y2="1065.4" stroke="#27272b" stroke-dasharray="3 3"/><line x1="386.01" x2="386.01" y1="818.7" y2="1065.4" stroke="#27272b" stroke-dasharray="3 3"/><line x1="408.62" x2="408.62" y1="818.7" y2="1065.4" stroke="#27272b" stroke-dasharray="3 3"/><line x1="431.23" x2="431.23" y1="818.7" y2="1065.4" stroke="#27272b" stroke-dasharray="3 3"/><line x1="453.83" x2="453.83" y1="818.7" y2="1065.4" stroke="#27272b" stroke-dasharray="3 3"/><line x1="476.44" x2="476.44" y1="818.7" y2="1065.4" stroke="#27272b" stroke-dasharray="3 3"/><line x1="499.04" x2="499.04" y1="818.7" y2="1065.4" stroke="#27272b" stroke-dasharray="3 3"/><line x1="521.64" x2="521.64" y1="818.7" y2="1065.4" stroke="#27272b" stroke-dasharray="3 3"/><line x1="544.25" x2="544.25" y1="818.7" y2="1065.4" stroke="#27272b" stroke-dasharray="3 3"/><line x1="566.86" x2="566.86" y1="818.7" y2="1065.4" stroke="#27272b" stroke-dasharray="3 3"/><line x1="589.46" x2="589.46" y1="818.7" y2="1065.4" stroke="#27272b" stroke-dasharray="3 3"/><line x1="612.07" x2="612.07" y1="818.7" y2="1065.4" stroke="#27272b" stroke-dasharray="3 3"/><line x1="634.67" x2="634.67" y1="818.7" y2="1065.4" stroke="#27272b" stroke-dasharray="3 3"/><line x1="657.27" x2="657.27" y1="818.7" y2="1065.4" stroke="#27272b" stroke-dasharray="3 3"/><line x1="679.88" x2="679.88" y1="818.7" y2="1065.4" stroke="#27272b" stroke-dasharray="3 3"/><line x1="702.49" x2="702.49" y1="818.7" y2="1065.4" stroke="#27272b" stroke-dasharray="3 3"/><line x1="725.09" x2="725.09" y1="818.7" y2="1065.4" stroke="#27272b" stroke-dasharray="3 3"/><line x1="747.69" x2="747.69" y1="818.7" y2="1065.4" stroke="#27272b" stroke-dasharray="3 3"/><line x1="770.30" x2="770.30" y1="818.7" y2="1065.4" stroke="#27272b" stroke-dasharray="3 3"/><line x1="318.20" x2="318.20" y1="818.7" y2="1065.4" stroke="#55555a"/><line x1="318.20" x2="770.30" y1="1065.4" y2="1065.4" stroke="#55555a"/><path d="M320.46,1065.4 V906.25 Q320.46,905.05 321.66,905.05 H337.34 Q338.54,905.05 338.54,906.25 V1065.4 Z" fill="#9f88f6"/><path d="M388.28,1065.4 V1041.93 Q388.28,1040.73 389.48,1040.73 H405.16 Q406.36,1040.73 406.36,1041.93 V1065.4 Z" fill="#9f88f6"/><path d="M410.88,1065.4 V1004.93 Q410.88,1003.73 412.08,1003.73 H427.76 Q428.96,1003.73 428.96,1004.93 V1065.4 Z" fill="#9f88f6"/><path d="M433.49,1065.4 V1017.26 Q433.49,1016.06 434.69,1016.06 H450.37 Q451.57,1016.06 451.57,1017.26 V1065.4 Z" fill="#9f88f6"/><path d="M456.09,1065.4 V1029.60 Q456.09,1028.39 457.29,1028.39 H472.97 Q474.17,1028.39 474.17,1029.60 V1065.4 Z" fill="#9f88f6"/><path d="M478.70,1065.4 V1054.27 Q478.70,1053.07 479.90,1053.07 H495.58 Q496.78,1053.07 496.78,1054.27 V1065.4 Z" fill="#9f88f6"/><path d="M501.30,1065.4 V1017.26 Q501.30,1016.06 502.50,1016.06 H518.18 Q519.38,1016.06 519.38,1017.26 V1065.4 Z" fill="#9f88f6"/><path d="M523.91,1065.4 V1029.60 Q523.91,1028.39 525.11,1028.39 H540.79 Q541.99,1028.39 541.99,1029.60 V1065.4 Z" fill="#9f88f6"/><path d="M546.51,1065.4 V1004.93 Q546.51,1003.73 547.71,1003.73 H563.39 Q564.59,1003.73 564.59,1004.93 V1065.4 Z" fill="#9f88f6"/><path d="M569.12,1065.4 V1017.26 Q569.12,1016.06 570.32,1016.06 H586.00 Q587.20,1016.06 587.20,1017.26 V1065.4 Z" fill="#9f88f6"/><path d="M591.72,1065.4 V967.92 Q591.72,966.72 592.92,966.72 H608.60 Q609.80,966.72 609.80,967.92 V1065.4 Z" fill="#9f88f6"/><path d="M614.33,1065.4 V1017.26 Q614.33,1016.06 615.53,1016.06 H631.21 Q632.41,1016.06 632.41,1017.26 V1065.4 Z" fill="#9f88f6"/><path d="M636.93,1065.4 V1029.60 Q636.93,1028.39 638.13,1028.39 H653.81 Q655.01,1028.39 655.01,1029.60 V1065.4 Z" fill="#9f88f6"/><path d="M659.54,1065.4 V1004.93 Q659.54,1003.73 660.74,1003.73 H676.42 Q677.62,1003.73 677.62,1004.93 V1065.4 Z" fill="#9f88f6"/><path d="M682.14,1065.4 V918.58 Q682.14,917.38 683.34,917.38 H699.02 Q700.22,917.38 700.22,918.58 V1065.4 Z" fill="#9f88f6"/><path d="M704.75,1065.4 V1004.93 Q704.75,1003.73 705.95,1003.73 H721.63 Q722.83,1003.73 722.83,1004.93 V1065.4 Z" fill="#9f88f6"/><path d="M749.96,1065.4 V832.24 Q749.96,831.04 751.16,831.04 H766.84 Q768.04,831.04 768.04,832.24 V1065.4 Z" fill="#9f88f6"/></svg>
<div class="t" style="left:305.05px;top:1059.00px;font-size:10.5px;line-height:14px;color:#bcbcc0;">0</div>
<div class="t" style="left:305.10px;top:997.33px;font-size:10.5px;line-height:14px;color:#bcbcc0;">5</div>
<div class="t" style="left:299.20px;top:935.65px;font-size:10.5px;line-height:14px;color:#bcbcc0;">10</div>
<div class="t" style="left:299.25px;top:873.98px;font-size:10.5px;line-height:14px;color:#bcbcc0;">15</div>
<div class="t" style="left:299.20px;top:816.30px;font-size:10.5px;line-height:14px;color:#bcbcc0;">20</div>
<div class="t" style="left:315.15px;top:1070.00px;font-size:11px;line-height:14px;color:#bcbcc0;">0</div>
<div class="t" style="left:337.75px;top:1070.00px;font-size:11px;line-height:14px;color:#bcbcc0;">5</div>
<div class="t" style="left:357.08px;top:1070.00px;font-size:11px;line-height:14px;color:#bcbcc0;">10</div>
<div class="t" style="left:379.71px;top:1070.00px;font-size:11px;line-height:14px;color:#bcbcc0;">15</div>
<div class="t" style="left:402.44px;top:1070.00px;font-size:11px;line-height:14px;color:#bcbcc0;">20</div>
<div class="t" style="left:425.07px;top:1070.00px;font-size:11px;line-height:14px;color:#bcbcc0;">25</div>
<div class="t" style="left:447.73px;top:1070.00px;font-size:11px;line-height:14px;color:#bcbcc0;">30</div>
<div class="t" style="left:470.36px;top:1070.00px;font-size:11px;line-height:14px;color:#bcbcc0;">35</div>
<div class="t" style="left:493.01px;top:1070.00px;font-size:11px;line-height:14px;color:#bcbcc0;">40</div>
<div class="t" style="left:515.64px;top:1070.00px;font-size:11px;line-height:14px;color:#bcbcc0;">45</div>
<div class="t" style="left:538.12px;top:1070.00px;font-size:11px;line-height:14px;color:#bcbcc0;">50</div>
<div class="t" style="left:560.75px;top:1070.00px;font-size:11px;line-height:14px;color:#bcbcc0;">55</div>
<div class="t" style="left:583.29px;top:1070.00px;font-size:11px;line-height:14px;color:#bcbcc0;">60</div>
<div class="t" style="left:605.92px;top:1070.00px;font-size:11px;line-height:14px;color:#bcbcc0;">65</div>
<div class="t" style="left:628.50px;top:1070.00px;font-size:11px;line-height:14px;color:#bcbcc0;">70</div>
<div class="t" style="left:651.12px;top:1070.00px;font-size:11px;line-height:14px;color:#bcbcc0;">75</div>
<div class="t" style="left:673.75px;top:1070.00px;font-size:11px;line-height:14px;color:#bcbcc0;">80</div>
<div class="t" style="left:696.38px;top:1070.00px;font-size:11px;line-height:14px;color:#bcbcc0;">85</div>
<div class="t" style="left:718.94px;top:1070.00px;font-size:11px;line-height:14px;color:#bcbcc0;">90</div>
<div class="t" style="left:741.57px;top:1070.00px;font-size:11px;line-height:14px;color:#bcbcc0;">95</div>
<div class="t" style="left:760.90px;top:1070.00px;font-size:11px;line-height:14px;color:#bcbcc0;">100</div>
<div class="t" style="left:228.0px;top:881.4px;width:100px;text-align:center;font-size:11px;line-height:14px;color:#c8c8cc;transform:rotate(-90deg)">Frequency (%)</div>
<div class="b" style="left:810.9px;top:739.3px;width:537.2px;height:420px;background:#09090b;border:1px solid #1c1c20;border-radius:8px;box-sizing:border-box;"></div>
<div class="t" style="left:826.10px;top:755.90px;font-size:12.5px;line-height:16px;color:#f4f4f5;letter-spacing:0.150px;">Completeness</div>
<svg class="b" style="left:912.70px;top:758.50px" width="11" height="11" viewBox="0 0 24 24" fill="none" stroke="#e4e4e7" stroke-width="2" stroke-linecap="round" stroke-linejoin="round"><circle cx="12" cy="12" r="10"/><path d="M12 16v-4"/><path d="M12 8h.01"/></svg>
<svg class="b" style="left:993.2px;top:790.7px;" width="15" height="10" viewBox="0 0 15 10" fill="none"><path d="M14.3,5H0.8M4.6,1.3L0.8,5L4.6,8.7" stroke="#d4d4d8" stroke-width="1.1" stroke-linecap="round" stroke-linejoin="round"/></svg>
<div class="t" style="left:1016.00px;top:788.10px;font-size:10.5px;line-height:14px;color:#a8a8ae;letter-spacing:-0.074px;">All History (6/25/25 – 12/22/25)</div>
<svg class="b" style="left:1165.8px;top:790.7px;" width="15" height="10" viewBox="0 0 15 10" fill="none"><path d="M0.7,5H14.2M10.4,1.3L14.2,5L10.4,8.7" stroke="#d4d4d8" stroke-width="1.1" stroke-linecap="round" stroke-linejoin="round"/></svg>
<svg class="b" style="left:0;top:0" width="1920" height="1086" viewBox="0 0 1920 1086" fill="none"><line x1="871.30" x2="1323.40" y1="983.17" y2="983.17" stroke="#27272b" stroke-dasharray="3 3"/><line x1="871.30" x2="1323.40" y1="900.93" y2="900.93" stroke="#27272b" stroke-dasharray="3 3"/><line x1="871.30" x2="1323.40" y1="818.70" y2="818.70" stroke="#27272b" stroke-dasharray="3 3"/><line x1="893.90" x2="893.90" y1="818.7" y2="1065.4" stroke="#27272b" stroke-dasharray="3 3"/><line x1="916.51" x2="916.51" y1="818.7" y2="1065.4" stroke="#27272b" stroke-dasharray="3 3"/><line x1="939.12" x2="939.12" y1="818.7" y2="1065.4" stroke="#27272b" stroke-dasharray="3 3"/><line x1="961.72" x2="961.72" y1="818.7" y2="1065.4" stroke="#27272b" stroke-dasharray="3 3"/><line x1="984.32" x2="984.32" y1="818.7" y2="1065.4" stroke="#27272b" stroke-dasharray="3 3"/><line x1="1006.93" x2="1006.93" y1="818.7" y2="1065.4" stroke="#27272b" stroke-dasharray="3 3"/><line x1="1029.53" x2="1029.53" y1="818.7" y2="1065.4" stroke="#27272b" stroke-dasharray="3 3"/><line x1="1052.14" x2="1052.14" y1="818.7" y2="1065.4" stroke="#27272b" stroke-dasharray="3 3"/><line x1="1074.74" x2="1074.74" y1="818.7" y2="1065.4" stroke="#27272b" stroke-dasharray="3 3"/><line x1="1097.35" x2="1097.35" y1="818.7" y2="1065.4" stroke="#27272b" stroke-dasharray="3 3"/><line x1="1119.95" x2="1119.95" y1="818.7" y2="1065.4" stroke="#27272b" stroke-dasharray="3 3"/><line x1="1142.56" x2="1142.56" y1="818.7" y2="1065.4" stroke="#27272b" stroke-dasharray="3 3"/><line x1="1165.16" x2="1165.16" y1="818.7" y2="1065.4" stroke="#27272b" stroke-dasharray="3 3"/><line x1="1187.77" x2="1187.77" y1="818.7" y2="1065.4" stroke="#27272b" stroke-dasharray="3 3"/><line x1="1210.38" x2="1210.38" y1="818.7" y2="1065.4" stroke="#27272b" stroke-dasharray="3 3"/><line x1="1232.98" x2="1232.98" y1="818.7" y2="1065.4" stroke="#27272b" stroke-dasharray="3 3"/><line x1="1255.59" x2="1255.59" y1="818.7" y2="1065.4" stroke="#27272b" stroke-dasharray="3 3"/><line x1="1278.19" x2="1278.19" y1="818.7" y2="1065.4" stroke="#27272b" stroke-dasharray="3 3"/><line x1="1300.80" x2="1300.80" y1="818.7" y2="1065.4" stroke="#27272b" stroke-dasharray="3 3"/><line x1="1323.40" x2="1323.40" y1="818.7" y2="1065.4" stroke="#27272b" stroke-dasharray="3 3"/><line x1="871.30" x2="871.30" y1="818.7" y2="1065.4" stroke="#55555a"/><line x1="871.30" x2="1323.40" y1="1065.4" y2="1065.4" stroke="#55555a"/><path d="M873.56,1065.4 V951.47 Q873.56,950.27 874.76,950.27 H890.44 Q891.64,950.27 891.64,951.47 V1065.4 Z" fill="#3498db"/><path d="M918.77,1065.4 V1050.15 Q918.77,1048.95 919.97,1048.95 H935.65 Q936.85,1048.95 936.85,1050.15 V1065.4 Z" fill="#3498db"/><path d="M941.38,1065.4 V967.92 Q941.38,966.72 942.58,966.72 H958.26 Q959.46,966.72 959.46,967.92 V1065.4 Z" fill="#3498db"/><path d="M963.98,1065.4 V935.03 Q963.98,933.83 965.18,933.83 H980.86 Q982.06,933.83 982.06,935.03 V1065.4 Z" fill="#3498db"/><path d="M986.59,1065.4 V1050.15 Q986.59,1048.95 987.79,1048.95 H1003.47 Q1004.67,1048.95 1004.67,1050.15 V1065.4 Z" fill="#3498db"/><path d="M1009.19,1065.4 V1033.71 Q1009.19,1032.51 1010.39,1032.51 H1026.07 Q1027.27,1032.51 1027.27,1033.71 V1065.4 Z" fill="#3498db"/><path d="M1031.80,1065.4 V967.92 Q1031.80,966.72 1033.00,966.72 H1048.68 Q1049.88,966.72 1049.88,967.92 V1065.4 Z" fill="#3498db"/><path d="M1054.40,1065.4 V852.79 Q1054.40,851.59 1055.60,851.59 H1071.28 Q1072.48,851.59 1072.48,852.79 V1065.4 Z" fill="#3498db"/><path d="M1077.01,1065.4 V1000.81 Q1077.01,999.61 1078.21,999.61 H1093.89 Q1095.09,999.61 1095.09,1000.81 V1065.4 Z" fill="#3498db"/><path d="M1099.61,1065.4 V1050.15 Q1099.61,1048.95 1100.81,1048.95 H1116.49 Q1117.69,1048.95 1117.69,1050.15 V1065.4 Z" fill="#3498db"/><path d="M1122.22,1065.4 V1000.81 Q1122.22,999.61 1123.42,999.61 H1139.10 Q1140.30,999.61 1140.30,1000.81 V1065.4 Z" fill="#3498db"/><path d="M1144.82,1065.4 V885.69 Q1144.82,884.49 1146.02,884.49 H1161.70 Q1162.90,884.49 1162.90,885.69 V1065.4 Z" fill="#3498db"/><path d="M1167.43,1065.4 V1017.26 Q1167.43,1016.06 1168.63,1016.06 H1184.31 Q1185.51,1016.06 1185.51,1017.26 V1065.4 Z" fill="#3498db"/><path d="M1190.03,1065.4 V1050.15 Q1190.03,1048.95 1191.23,1048.95 H1206.91 Q1208.11,1048.95 1208.11,1050.15 V1065.4 Z" fill="#3498db"/><path d="M1212.64,1065.4 V1033.71 Q1212.64,1032.51 1213.84,1032.51 H1229.52 Q1230.72,1032.51 1230.72,1033.71 V1065.4 Z" fill="#3498db"/><path d="M1235.24,1065.4 V852.79 Q1235.24,851.59 1236.44,851.59 H1252.12 Q1253.32,851.59 1253.32,852.79 V1065.4 Z" fill="#3498db"/><path d="M1257.85,1065.4 V1000.81 Q1257.85,999.61 1259.05,999.61 H1274.73 Q1275.93,999.61 1275.93,1000.81 V1065.4 Z" fill="#3498db"/><path d="M1303.06,1065.4 V852.79 Q1303.06,851.59 1304.26,851.59 H1319.94 Q1321.14,851.59 1321.14,852.79 V1065.4 Z" fill="#3498db"/></svg>
<div class="t" style="left:858.15px;top:1059.00px;font-size:10.5px;line-height:14px;color:#bcbcc0;">0</div>
<div class="t" style="left:858.20px;top:976.77px;font-size:10.5px;line-height:14px;color:#bcbcc0;">5</div>
<div class="t" style="left:852.30px;top:894.53px;font-size:10.5px;line-height:14px;color:#bcbcc0;">10</div>
<div class="t" style="left:852.35px;top:816.30px;font-size:10.5px;line-height:14px;color:#bcbcc0;">15</div>
<div class="t" style="left:868.25px;top:1070.00px;font-size:11px;line-height:14px;color:#bcbcc0;">0</div>
<div class="t" style="left:890.85px;top:1070.00px;font-size:11px;line-height:14px;color:#bcbcc0;">5</div>
<div class="t" style="left:910.18px;top:1070.00px;font-size:11px;line-height:14px;color:#bcbcc0;">10</div>
<div class="t" style="left:932.81px;top:1070.00px;font-size:11px;line-height:14px;color:#bcbcc0;">15</div>
<div class="t" style="left:955.54px;top:1070.00px;font-size:11px;line-height:14px;color:#bcbcc0;">20</div>
<div class="t" style="left:978.17px;top:1070.00px;font-size:11px;line-height:14px;color:#bcbcc0;">25</div>
<div class="t" style="left:1000.83px;top:1070.00px;font-size:11px;line-height:14px;color:#bcbcc0;">30</div>
<div class="t" style="left:1023.46px;top:1070.00px;font-size:11px;line-height:14px;color:#bcbcc0;">35</div>
<div class="t" style="left:1046.11px;top:1070.00px;font-size:11px;line-height:14px;color:#bcbcc0;">40</div>
<div class="t" style="left:1068.74px;top:1070.00px;font-size:11px;line-height:14px;color:#bcbcc0;">45</div>
<div class="t" style="left:1091.22px;top:1070.00px;font-size:11px;line-height:14px;color:#bcbcc0;">50</div>
<div class="t" style="left:1113.85px;top:1070.00px;font-size:11px;line-height:14px;color:#bcbcc0;">55</div>
<div class="t" style="left:1136.38px;top:1070.00px;font-size:11px;line-height:14px;color:#bcbcc0;">60</div>
<div class="t" style="left:1159.02px;top:1070.00px;font-size:11px;line-height:14px;color:#bcbcc0;">65</div>
<div class="t" style="left:1181.60px;top:1070.00px;font-size:11px;line-height:14px;color:#bcbcc0;">70</div>
<div class="t" style="left:1204.23px;top:1070.00px;font-size:11px;line-height:14px;color:#bcbcc0;">75</div>
<div class="t" style="left:1226.86px;top:1070.00px;font-size:11px;line-height:14px;color:#bcbcc0;">80</div>
<div class="t" style="left:1249.48px;top:1070.00px;font-size:11px;line-height:14px;color:#bcbcc0;">85</div>
<div class="t" style="left:1272.04px;top:1070.00px;font-size:11px;line-height:14px;color:#bcbcc0;">90</div>
<div class="t" style="left:1294.67px;top:1070.00px;font-size:11px;line-height:14px;color:#bcbcc0;">95</div>
<div class="t" style="left:1314.00px;top:1070.00px;font-size:11px;line-height:14px;color:#bcbcc0;">100</div>
<div class="t" style="left:781.0999999999999px;top:881.4px;width:100px;text-align:center;font-size:11px;line-height:14px;color:#c8c8cc;transform:rotate(-90deg)">Frequency (%)</div>
<div class="b" style="left:1363.4px;top:739.3px;width:537.2px;height:420px;background:#09090b;border:1px solid #1c1c20;border-radius:8px;box-sizing:border-box;"></div>
<div class="t" style="left:1378.05px;top:755.90px;font-size:12.5px;line-height:16px;color:#f4f4f5;letter-spacing:0.065px;">Instruction Adherence</div>
<svg class="b" style="left:1505.20px;top:758.50px" width="11" height="11" viewBox="0 0 24 24" fill="none" stroke="#e4e4e7" stroke-width="2" stroke-linecap="round" stroke-linejoin="round"><circle cx="12" cy="12" r="10"/><path d="M12 16v-4"/><path d="M12 8h.01"/></svg>
<svg class="b" style="left:1546.0px;top:790.7px;" width="15" height="10" viewBox="0 0 15 10" fill="none"><path d="M14.3,5H0.8M4.6,1.3L0.8,5L4.6,8.7" stroke="#d4d4d8" stroke-width="1.1" stroke-linecap="round" stroke-linejoin="round"/></svg>
<div class="t" style="left:1568.80px;top:788.10px;font-size:10.5px;line-height:14px;color:#a8a8ae;letter-spacing:-0.074px;">All History (6/25/25 – 12/22/25)</div>
<svg class="b" style="left:1718.6px;top:790.7px;" width="15" height="10" viewBox="0 0 15 10" fill="none"><path d="M0.7,5H14.2M10.4,1.3L14.2,5L10.4,8.7" stroke="#d4d4d8" stroke-width="1.1" stroke-linecap="round" stroke-linejoin="round"/></svg>
<svg class="b" style="left:0;top:0" width="1920" height="1086" viewBox="0 0 1920 1086" fill="none"><line x1="1424.00" x2="1876.10" y1="1003.73" y2="1003.73" stroke="#27272b" stroke-dasharray="3 3"/><line x1="1424.00" x2="1876.10" y1="942.05" y2="942.05" stroke="#27272b" stroke-dasharray="3 3"/><line x1="1424.00" x2="1876.10" y1="880.38" y2="880.38" stroke="#27272b" stroke-dasharray="3 3"/><line x1="1424.00" x2="1876.10" y1="818.70" y2="818.70" stroke="#27272b" stroke-dasharray="3 3"/><line x1="1446.61" x2="1446.61" y1="818.7" y2="1065.4" stroke="#27272b" stroke-dasharray="3 3"/><line x1="1469.21" x2="1469.21" y1="818.7" y2="1065.4" stroke="#27272b" stroke-dasharray="3 3"/><line x1="1491.82" x2="1491.82" y1="818.7" y2="1065.4" stroke="#27272b" stroke-dasharray="3 3"/><line x1="1514.42" x2="1514.42" y1="818.7" y2="1065.4" stroke="#27272b" stroke-dasharray="3 3"/><line x1="1537.03" x2="1537.03" y1="818.7" y2="1065.4" stroke="#27272b" stroke-dasharray="3 3"/><line x1="1559.63" x2="1559.63" y1="818.7" y2="1065.4" stroke="#27272b" stroke-dasharray="3 3"/><line x1="1582.24" x2="1582.24" y1="818.7" y2="1065.4" stroke="#27272b" stroke-dasharray="3 3"/><line x1="1604.84" x2="1604.84" y1="818.7" y2="1065.4" stroke="#27272b" stroke-dasharray="3 3"/><line x1="1627.44" x2="1627.44" y1="818.7" y2="1065.4" stroke="#27272b" stroke-dasharray="3 3"/><line x1="1650.05" x2="1650.05" y1="818.7" y2="1065.4" stroke="#27272b" stroke-dasharray="3 3"/><line x1="1672.65" x2="1672.65" y1="818.7" y2="1065.4" stroke="#27272b" stroke-dasharray="3 3"/><line x1="1695.26" x2="1695.26" y1="818.7" y2="1065.4" stroke="#27272b" stroke-dasharray="3 3"/><line x1="1717.87" x2="1717.87" y1="818.7" y2="1065.4" stroke="#27272b" stroke-dasharray="3 3"/><line x1="1740.47" x2="1740.47" y1="818.7" y2="1065.4" stroke="#27272b" stroke-dasharray="3 3"/><line x1="1763.08" x2="1763.08" y1="818.7" y2="1065.4" stroke="#27272b" stroke-dasharray="3 3"/><line x1="1785.68" x2="1785.68" y1="818.7" y2="1065.4" stroke="#27272b" stroke-dasharray="3 3"/><line x1="1808.29" x2="1808.29" y1="818.7" y2="1065.4" stroke="#27272b" stroke-dasharray="3 3"/><line x1="1830.89" x2="1830.89" y1="818.7" y2="1065.4" stroke="#27272b" stroke-dasharray="3 3"/><line x1="1853.49" x2="1853.49" y1="818.7" y2="1065.4" stroke="#27272b" stroke-dasharray="3 3"/><line x1="1876.10" x2="1876.10" y1="818.7" y2="1065.4" stroke="#27272b" stroke-dasharray="3 3"/><line x1="1424.00" x2="1424.00" y1="818.7" y2="1065.4" stroke="#55555a"/><line x1="1424.00" x2="1876.10" y1="1065.4" y2="1065.4" stroke="#55555a"/><path d="M1426.26,1065.4 V893.91 Q1426.26,892.71 1427.46,892.71 H1443.14 Q1444.34,892.71 1444.34,893.91 V1065.4 Z" fill="#2ecc71"/><path d="M1494.08,1065.4 V1017.26 Q1494.08,1016.06 1495.28,1016.06 H1510.96 Q1512.16,1016.06 1512.16,1017.26 V1065.4 Z" fill="#2ecc71"/><path d="M1516.68,1065.4 V967.92 Q1516.68,966.72 1517.88,966.72 H1533.56 Q1534.76,966.72 1534.76,967.92 V1065.4 Z" fill="#2ecc71"/><path d="M1539.29,1065.4 V1004.93 Q1539.29,1003.73 1540.49,1003.73 H1556.17 Q1557.37,1003.73 1557.37,1004.93 V1065.4 Z" fill="#2ecc71"/><path d="M1561.89,1065.4 V1054.27 Q1561.89,1053.07 1563.09,1053.07 H1578.77 Q1579.97,1053.07 1579.97,1054.27 V1065.4 Z" fill="#2ecc71"/><path d="M1584.50,1065.4 V1054.27 Q1584.50,1053.07 1585.70,1053.07 H1601.38 Q1602.58,1053.07 1602.58,1054.27 V1065.4 Z" fill="#2ecc71"/><path d="M1607.10,1065.4 V992.59 Q1607.10,991.39 1608.30,991.39 H1623.98 Q1625.18,991.39 1625.18,992.59 V1065.4 Z" fill="#2ecc71"/><path d="M1629.71,1065.4 V1054.27 Q1629.71,1053.07 1630.91,1053.07 H1646.59 Q1647.79,1053.07 1647.79,1054.27 V1065.4 Z" fill="#2ecc71"/><path d="M1652.31,1065.4 V980.26 Q1652.31,979.06 1653.51,979.06 H1669.19 Q1670.39,979.06 1670.39,980.26 V1065.4 Z" fill="#2ecc71"/><path d="M1674.92,1065.4 V1004.93 Q1674.92,1003.73 1676.12,1003.73 H1691.80 Q1693.00,1003.73 1693.00,1004.93 V1065.4 Z" fill="#2ecc71"/><path d="M1697.52,1065.4 V1004.93 Q1697.52,1003.73 1698.72,1003.73 H1714.40 Q1715.60,1003.73 1715.60,1004.93 V1065.4 Z" fill="#2ecc71"/><path d="M1720.13,1065.4 V1041.93 Q1720.13,1040.73 1721.33,1040.73 H1737.01 Q1738.21,1040.73 1738.21,1041.93 V1065.4 Z" fill="#2ecc71"/><path d="M1742.73,1065.4 V1041.93 Q1742.73,1040.73 1743.93,1040.73 H1759.61 Q1760.81,1040.73 1760.81,1041.93 V1065.4 Z" fill="#2ecc71"/><path d="M1765.34,1065.4 V967.92 Q1765.34,966.72 1766.54,966.72 H1782.22 Q1783.42,966.72 1783.42,967.92 V1065.4 Z" fill="#2ecc71"/><path d="M1787.94,1065.4 V955.59 Q1787.94,954.39 1789.14,954.39 H1804.82 Q1806.02,954.39 1806.02,955.59 V1065.4 Z" fill="#2ecc71"/><path d="M1810.55,1065.4 V1017.26 Q1810.55,1016.06 1811.75,1016.06 H1827.43 Q1828.63,1016.06 1828.63,1017.26 V1065.4 Z" fill="#2ecc71"/><path d="M1855.76,1065.4 V844.57 Q1855.76,843.37 1856.96,843.37 H1872.64 Q1873.84,843.37 1873.84,844.57 V1065.4 Z" fill="#2ecc71"/></svg>
<div class="t" style="left:1410.85px;top:1059.00px;font-size:10.5px;line-height:14px;color:#bcbcc0;">0</div>
<div class="t" style="left:1410.90px;top:997.33px;font-size:10.5px;line-height:14px;color:#bcbcc0;">5</div>
<div class="t" style="left:1405.00px;top:935.65px;font-size:10.5px;line-height:14px;color:#bcbcc0;">10</div>
<div class="t" style="left:1405.05px;top:873.98px;font-size:10.5px;line-height:14px;color:#bcbcc0;">15</div>
<div class="t" style="left:1405.00px;top:816.30px;font-size:10.5px;line-height:14px;color:#bcbcc0;">20</div>
<div class="t" style="left:1420.95px;top:1070.00px;font-size:11px;line-height:14px;color:#bcbcc0;">0</div>
<div class="t" style="left:1443.56px;top:1070.00px;font-size:11px;line-height:14px;color:#bcbcc0;">5</div>
<div class="t" style="left:1462.89px;top:1070.00px;font-size:11px;line-height:14px;color:#bcbcc0;">10</div>
<div class="t" style="left:1485.52px;top:1070.00px;font-size:11px;line-height:14px;color:#bcbcc0;">15</div>
<div class="t" style="left:1508.25px;top:1070.00px;font-size:11px;line-height:14px;color:#bcbcc0;">20</div>
<div class="t" style="left:1530.88px;top:1070.00px;font-size:11px;line-height:14px;color:#bcbcc0;">25</div>
<div class="t" style="left:1553.53px;top:1070.00px;font-size:11px;line-height:14px;color:#bcbcc0;">30</div>
<div class="t" style="left:1576.16px;top:1070.00px;font-size:11px;line-height:14px;color:#bcbcc0;">35</div>
<div class="t" style="left:1598.81px;top:1070.00px;font-size:11px;line-height:14px;color:#bcbcc0;">40</div>
<div class="t" style="left:1621.44px;top:1070.00px;font-size:11px;line-height:14px;color:#bcbcc0;">45</div>
<div class="t" style="left:1643.92px;top:1070.00px;font-size:11px;line-height:14px;color:#bcbcc0;">50</div>
<div class="t" style="left:1666.55px;top:1070.00px;font-size:11px;line-height:14px;color:#bcbcc0;">55</div>
<div class="t" style="left:1689.09px;top:1070.00px;font-size:11px;line-height:14px;color:#bcbcc0;">60</div>
<div class="t" style="left:1711.72px;top:1070.00px;font-size:11px;line-height:14px;color:#bcbcc0;">65</div>
<div class="t" style="left:1734.30px;top:1070.00px;font-size:11px;line-height:14px;color:#bcbcc0;">70</div>
<div class="t" style="left:1756.93px;top:1070.00px;font-size:11px;line-height:14px;color:#bcbcc0;">75</div>
<div class="t" style="left:1779.56px;top:1070.00px;font-size:11px;line-height:14px;color:#bcbcc0;">80</div>
<div class="t" style="left:1802.18px;top:1070.00px;font-size:11px;line-height:14px;color:#bcbcc0;">85</div>
<div class="t" style="left:1824.74px;top:1070.00px;font-size:11px;line-height:14px;color:#bcbcc0;">90</div>
<div class="t" style="left:1847.37px;top:1070.00px;font-size:11px;line-height:14px;color:#bcbcc0;">95</div>
<div class="t" style="left:1866.70px;top:1070.00px;font-size:11px;line-height:14px;color:#bcbcc0;">100</div>
<div class="t" style="left:1333.8px;top:881.4px;width:100px;text-align:center;font-size:11px;line-height:14px;color:#c8c8cc;transform:rotate(-90deg)">Frequency (%)</div>
<div class="b" style="left:1856.2px;top:1022.2px;width:45px;height:45px;border-radius:50%;background:#f4c73f"></div>
<svg class="b" style="left:1868px;top:1033px" width="23" height="25" viewBox="0 0 23 25"><path d="M3,1 H19 Q21,1 21,3 V23.5 L15.5,21.5 H3 Q1.3,21.5 1.3,19.5 V3 Q1.3,1 3,1 Z" fill="#1d1d20"/><path d="M4.5,14.5 Q11,18.8 17.5,14.5" stroke="#f4c73f" stroke-width="1.5" fill="none" stroke-linecap="round"/></svg>
<div class="b" style="left:0;top:-20px;width:1920px;height:1106px;border:1px solid #454547;border-radius:0 0 12px 12px;box-shadow:0 0 0 20px #1d1515;z-index:50;pointer-events:none"></div>
<div class="b" style="left:0px;top:-1px;width:239px;height:1086.5px;background:#000;border:1px solid #1e1e21;border-radius:14.5px 14.5px 17.5px 17.5px;"></div>
<svg class="b" style="left:40px;top:20px" width="40" height="36" viewBox="0 0 40 36"><path d="M4,6.3 L23,6.3 C29.2,6.3 32.4,12 32.4,18.6 C32.4,25.2 27.6,30.4 21.2,31.3 L19.9,27.3 C24.9,26.3 28.1,22.8 28.1,18.6 C28.1,14.2 25.6,10.9 21.2,10.9 L6.3,10.9 Z" fill="#f4c73f"/><path d="M6.9,12.1 L21,12.1 C24.8,12.1 26.9,15.3 26.9,18.7 C26.9,22.4 24.2,25.3 20.6,25.3 L17,25.3 L19.7,31.3 L14.4,31.3 L10.2,21.1 L20.6,20.9 C22.2,20.9 22.7,19.8 22.7,18.7 C22.7,17.4 22,16.5 20.6,16.5 L8.4,16.5 Z" fill="#f4c73f"/></svg>
<div class="t" style="left:78.65px;top:24.00px;font-size:24px;line-height:31px;color:#fff;letter-spacing:0.638px;">DeepRails</div>
<div class="t" style="left:72.95px;top:63.00px;font-size:16.5px;line-height:21px;color:#fff;letter-spacing:0.205px;">API Console</div>
<div class="b" style="left:70.5px;top:97.5px;width:55.5px;height:22.5px;background:#0f0f10;border:1px solid #232326;border-radius:6px;"></div>
<svg class="b" style="left:78.50px;top:103.80px" width="10" height="10" viewBox="0 0 24 24" fill="none" stroke="#f4c73f" stroke-width="2.2" stroke-linecap="round" stroke-linejoin="round"><line x1="6" x2="6" y1="3" y2="15"/><circle cx="18" cy="6" r="3"/><circle cx="6" cy="18" r="3"/><path d="M18 9a9 9 0 0 1-9 9"/></svg>
<div class="t" style="left:94.45px;top:103.00px;font-size:9.5px;line-height:12px;color:#d4d4d8;letter-spacing:0.325px;">v0.52</div>
<div class="b" style="left:132px;top:98px;width:36.5px;height:21.5px;background:#0b1512;border:1px solid #17463a;border-radius:6px;"></div>
<div class="t" style="left:137.45px;top:103.50px;font-size:8.5px;line-height:11px;color:#2fcf8f;font-weight:700;letter-spacing:0.117px;">PROD</div>
<svg class="b" style="left:26.90px;top:173.50px" width="17" height="17" viewBox="0 0 24 24" fill="none" stroke="#fff" stroke-width="2" stroke-linecap="round" stroke-linejoin="round"><rect width="7" height="9" x="3" y="3" rx="1"/><rect width="7" height="5" x="14" y="3" rx="1"/><rect width="7" height="9" x="14" y="12" rx="1"/><rect width="7" height="5" x="3" y="16" rx="1"/></svg>
<div class="t" style="left:50.55px;top:173.50px;font-size:13px;line-height:17px;color:#fff;letter-spacing:-0.275px;">Dashboard</div>
<div class="t" style="left:27.40px;top:226.60px;font-size:12px;line-height:16px;color:#b4b4b8;font-weight:700;letter-spacing:0.412px;">API CONTROL PANEL</div>
<div class="b" style="left:12px;top:258.6px;width:215px;height:33.5px;background:#322712;border-radius:7px;border-left:3px solid #f4c73f;box-sizing:border-box"></div>
<svg class="b" style="left:29.80px;top:266.90px" width="17" height="17" viewBox="0 0 24 24" fill="none" stroke="#f4c73f" stroke-width="2" stroke-linecap="round" stroke-linejoin="round"><path d="M20 13c0 5-3.5 7.5-7.66 8.95a1 1 0 0 1-.67-.01C7.5 20.5 4 18 4 13V6a1 1 0 0 1 1-1c2 0 4.5-1.2 6.24-2.72a1.17 1.17 0 0 1 1.52 0C14.51 3.81 17 5 19 5a1 1 0 0 1 1 1z"/><path d="m9 12 2 2 4-4"/></svg>
<div class="t" style="left:53.35px;top:266.90px;font-size:13px;line-height:17px;color:#f4c73f;letter-spacing:-0.070px;">Defend</div>
<svg class="b" style="left:26.65px;top:305.95px" width="17.5" height="17.5" viewBox="0 0 24 24" fill="none" stroke="#fff" stroke-width="2" stroke-linecap="round" stroke-linejoin="round"><path d="M22 12h-2.48a2 2 0 0 0-1.93 1.46l-2.35 8.36a.25.25 0 0 1-.48 0L9.24 2.18a.25.25 0 0 0-.48 0l-2.35 8.36A2 2 0 0 1 4.49 12H2"/></svg>
<div class="t" style="left:50.55px;top:306.20px;font-size:13px;line-height:17px;color:#fff;letter-spacing:-0.250px;">Monitor</div>
<svg class="b" style="left:26.75px;top:345.85px" width="15.5" height="15.5" viewBox="0 0 24 24" fill="none" stroke="#fff" stroke-width="2" stroke-linecap="round" stroke-linejoin="round"><path d="M10 2v7.527a2 2 0 0 1-.211.896L4.72 20.55a1 1 0 0 0 .9 1.45h12.76a1 1 0 0 0 .9-1.45l-5.069-10.127A2 2 0 0 1 14 9.527V2"/><path d="M8.5 2h7"/><path d="M7 16h10"/></svg>
<div class="t" style="left:48.55px;top:345.10px;font-size:13px;line-height:17px;color:#fff;letter-spacing:-0.289px;">Playground</div>
<div class="b" style="left:122.5px;top:346.3px;width:57.3px;height:14.7px;background:#08140d;border:1px solid #1d3b2a;border-radius:8px;"></div>
<div class="t" style="left:126.50px;top:349.00px;font-size:7.6px;line-height:10px;color:#22c55e;font-weight:700;letter-spacing:-0.175px;">FREE TO USE</div>
<div class="t" style="left:27.15px;top:399.00px;font-size:12px;line-height:16px;color:#b4b4b8;font-weight:700;letter-spacing:0.477px;">SUPPORT &amp; DOCS</div>
<svg class="b" style="left:27.10px;top:439.90px" width="15" height="15" viewBox="0 0 24 24" fill="none" stroke="#fff" stroke-width="2" stroke-linecap="round" stroke-linejoin="round"><path d="m16.24 7.76-1.804 5.411a2 2 0 0 1-1.265 1.265L7.76 16.24l1.804-5.411a2 2 0 0 1 1.265-1.265z"/><circle cx="12" cy="12" r="10"/></svg>
<div class="t" style="left:49.15px;top:438.90px;font-size:13px;line-height:17px;color:#fff;letter-spacing:-0.311px;">Getting Started</div>
<svg class="b" style="left:27.10px;top:478.60px" width="15" height="15" viewBox="0 0 24 24" fill="none" stroke="#fff" stroke-width="2" stroke-linecap="round" stroke-linejoin="round"><path d="M12 7v14"/><path d="M16 12h2"/><path d="M16 8h2"/><path d="M3 18a1 1 0 0 1-1-1V4a1 1 0 0 1 1-1h5a4 4 0 0 1 4 4 4 4 0 0 1 4-4h5a1 1 0 0 1 1 1v13a1 1 0 0 1-1 1h-6a3 3 0 0 0-3 3 3 3 0 0 0-3-3z"/><path d="M6 12h2"/><path d="M6 8h2"/></svg>
<div class="t" style="left:49.80px;top:477.60px;font-size:13px;line-height:17px;color:#fff;letter-spacing:-0.650px;">API Docs</div>
<svg class="b" style="left:27.10px;top:518.40px" width="15" height="15" viewBox="0 0 24 24" fill="none" stroke="#fff" stroke-width="2" stroke-linecap="round" stroke-linejoin="round"><path d="M14 9a2 2 0 0 1-2 2H6l-4 4V4a2 2 0 0 1 2-2h8a2 2 0 0 1 2 2z"/><path d="M18 9h2a2 2 0 0 1 2 2v11l-4-4h-6a2 2 0 0 1-2-2v-1"/></svg>
<div class="t" style="left:48.75px;top:517.40px;font-size:13px;line-height:17px;color:#fff;letter-spacing:-0.282px;">Live Support</div>
<svg class="b" style="left:27.00px;top:557.10px" width="15" height="15" viewBox="0 0 24 24" fill="none" stroke="#fff" stroke-width="2" stroke-linecap="round" stroke-linejoin="round"><path stroke="none" fill="#fff" d="M20.317 4.3698a19.7913 19.7913 0 00-4.8851-1.5152.0741.0741 0 00-.0785.0371c-.211.3753-.4447.8648-.6083 1.2495-1.8447-.2762-3.68-.2762-5.4868 0-.1636-.3933-.4058-.8742-.6177-1.2495a.077.077 0 00-.0785-.037 19.7363 19.7363 0 00-4.8852 1.515.0699.0699 0 00-.0321.0277C.5334 9.0458-.319 13.5799.0992 18.0578a.0824.0824 0 00.0312.0561c2.0528 1.5076 4.0413 2.4228 5.9929 3.0294a.0777.0777 0 00.0842-.0276c.4616-.6304.8731-1.2952 1.226-1.9942a.076.076 0 00-.0416-.1057c-.6528-.2476-1.2743-.5495-1.8722-.8923a.077.077 0 01-.0076-.1277c.1258-.0943.2517-.1923.3718-.2914a.0743.0743 0 01.0776-.0105c3.9278 1.7933 8.18 1.7933 12.0614 0a.0739.0739 0 01.0785.0095c.1202.099.246.1981.3728.2924a.077.077 0 01-.0066.1276 12.2986 12.2986 0 01-1.873.8914.0766.0766 0 00-.0407.1067c.3604.698.7719 1.3628 1.225 1.9932a.076.076 0 00.0842.0286c1.961-.6067 3.9495-1.5219 6.0023-3.0294a.077.077 0 00.0313-.0552c.5004-5.177-.8382-9.6739-3.5485-13.6604a.061.061 0 00-.0312-.0286zM8.02 15.3312c-1.1825 0-2.1569-1.0857-2.1569-2.419 0-1.3332.9555-2.4189 2.157-2.4189 1.2108 0 2.1757 1.0952 2.1568 2.419 0 1.3332-.9555 2.4189-2.1569 2.4189zm7.9748 0c-1.1825 0-2.1569-1.0857-2.1569-2.419 0-1.3332.9554-2.4189 2.1569-2.4189 1.2108 0 2.1757 1.0952 2.1568 2.419 0 1.3332-.946 2.4189-2.1568 2.4189Z"/></svg>
<div class="t" style="left:49.60px;top:556.10px;font-size:13px;line-height:17px;color:#fff;letter-spacing:-0.518px;">Join Discord</div>
<div class="t" style="left:27.25px;top:609.80px;font-size:12px;line-height:16px;color:#b4b4b8;font-weight:700;letter-spacing:0.586px;">SETTINGS</div>
<svg class="b" style="left:27.30px;top:650.80px" width="15" height="15" viewBox="0 0 24 24" fill="none" stroke="#fff" stroke-width="2" stroke-linecap="round" stroke-linejoin="round"><rect width="20" height="14" x="2" y="5" rx="2"/><line x1="2" x2="22" y1="10" y2="10"/></svg>
<div class="t" style="left:48.45px;top:649.80px;font-size:13px;line-height:17px;color:#fff;letter-spacing:-0.283px;">Billing</div>
<div class="b" style="left:183px;top:650.9px;width:29.2px;height:15px;background:#111113;border:1px solid #3a3a40;border-radius:8px;"></div>
<div class="t" style="left:188.70px;top:653.50px;font-size:8px;line-height:10px;color:#fff;font-weight:700;letter-spacing:-0.250px;">PRO</div>
<svg class="b" style="left:27.30px;top:690.40px" width="15" height="15" viewBox="0 0 24 24" fill="none" stroke="#fff" stroke-width="2" stroke-linecap="round" stroke-linejoin="round"><path d="M2.586 17.414A2 2 0 0 0 2 18.828V21a1 1 0 0 0 1 1h3a1 1 0 0 0 1-1v-1a1 1 0 0 1 1-1h1a1 1 0 0 0 1-1v-1a1 1 0 0 1 1-1h.172a2 2 0 0 0 1.414-.586l.814-.814a6.5 6.5 0 1 0-4-4z"/><circle cx="16.5" cy="7.5" r=".5" fill="#fff"/></svg>
<div class="t" style="left:49.50px;top:689.40px;font-size:13px;line-height:17px;color:#fff;letter-spacing:-0.900px;">API Keys</div>
<svg class="b" style="left:27.30px;top:729.50px" width="15" height="15" viewBox="0 0 24 24" fill="none" stroke="#fff" stroke-width="2" stroke-linecap="round" stroke-linejoin="round"><path d="M20 13c0 5-3.5 7.5-7.66 8.95a1 1 0 0 1-.67-.01C7.5 20.5 4 18 4 13V6a1 1 0 0 1 1-1c2 0 4.5-1.2 6.24-2.72a1.17 1.17 0 0 1 1.52 0C14.51 3.81 17 5 19 5a1 1 0 0 1 1 1z"/></svg>
<div class="t" style="left:48.90px;top:728.50px;font-size:13px;line-height:17px;color:#fff;letter-spacing:-0.207px;">Security</div>
<svg class="b" style="left:27.30px;top:768.60px" width="15" height="15" viewBox="0 0 24 24" fill="none" stroke="#fff" stroke-width="2" stroke-linecap="round" stroke-linejoin="round"><path d="M18 21a8 8 0 0 0-16 0"/><circle cx="10" cy="8" r="5"/><path d="M22 20c0-3.37-2-6.5-4-8a5 5 0 0 0-.45-8.3"/></svg>
<div class="t" style="left:49.90px;top:767.60px;font-size:13px;line-height:17px;color:#fff;letter-spacing:-0.329px;">Team Management</div>
<div class="t" style="left:26.90px;top:906.50px;font-size:9px;line-height:12px;color:#5b5b60;letter-spacing:1.708px;">YOU'RE LOGGED IN AS</div>
<svg class="b" style="left:27.40px;top:927.20px" width="15" height="15" viewBox="0 0 24 24" fill="none" stroke="#f4c73f" stroke-width="2" stroke-linecap="round" stroke-linejoin="round"><path d="M11.562 3.266a.5.5 0 0 1 .876 0L15.39 8.87a1 1 0 0 0 1.516.294L21.183 5.5a.5.5 0 0 1 .798.519l-2.834 10.246a1 1 0 0 1-.956.734H5.81a1 1 0 0 1-.957-.734L2.02 6.02a.5.5 0 0 1 .798-.519l4.276 3.664a1 1 0 0 0 1.516-.294z"/><path d="M5 21h14"/></svg>
<div class="t" style="left:48.60px;top:926.40px;font-size:14px;line-height:18px;color:#fff;font-weight:700;letter-spacing:-0.110px;">Niraj Patel</div>
<svg class="b" style="left:189.90px;top:932.50px" width="11" height="11" viewBox="0 0 24 24" fill="none" stroke="#b8b8bc" stroke-width="2.4" stroke-linecap="round" stroke-linejoin="round"><path d="m9 18 6-6-6-6"/></svg>
<div class="t" style="left:48.35px;top:950.70px;font-size:14px;line-height:18px;color:#f4f4f5;letter-spacing:-0.121px;">DeepRails Inc</div>
<div class="b" style="left:16px;top:993px;width:143.8px;height:31.7px;background:#000;border:1px solid #222225;border-radius:16px;box-sizing:border-box;"></div>
<svg class="b" style="left:31.50px;top:1002.90px" width="13" height="13" viewBox="0 0 24 24" fill="none" stroke="#22c55e" stroke-width="2.2" stroke-linecap="round" stroke-linejoin="round"><path d="M12 20h.01"/><path d="M2 8.82a15 15 0 0 1 20 0"/><path d="M5 12.859a10 10 0 0 1 14 0"/><path d="M8.5 16.429a5 5 0 0 1 7 0"/></svg>
<div class="t" style="left:52.15px;top:1003.40px;font-size:9.5px;line-height:12px;color:#e4e4e7;letter-spacing:1.931px;">CONNECTED</div>
<div class="b" style="left:136.3px;top:1005.6px;width:8px;height:8px;border-radius:50%;background:#2fc48d;box-shadow:0 0 0 2.5px rgba(47,196,141,0.08)"></div>
<svg class="b" style="left:23.85px;top:1046.35px" width="10.5" height="10.5" viewBox="0 0 24 24" fill="none" stroke="#8a8a90" stroke-width="2" stroke-linecap="round" stroke-linejoin="round"><circle cx="12" cy="12" r="10"/><path d="M12 16v-4"/><path d="M12 8h.01"/></svg>
<div class="t" style="left:37.55px;top:1044.60px;font-size:10.5px;line-height:14px;color:#7c7c82;letter-spacing:0.018px;">Legal &amp; Compliance</div>
</div></body></html>
